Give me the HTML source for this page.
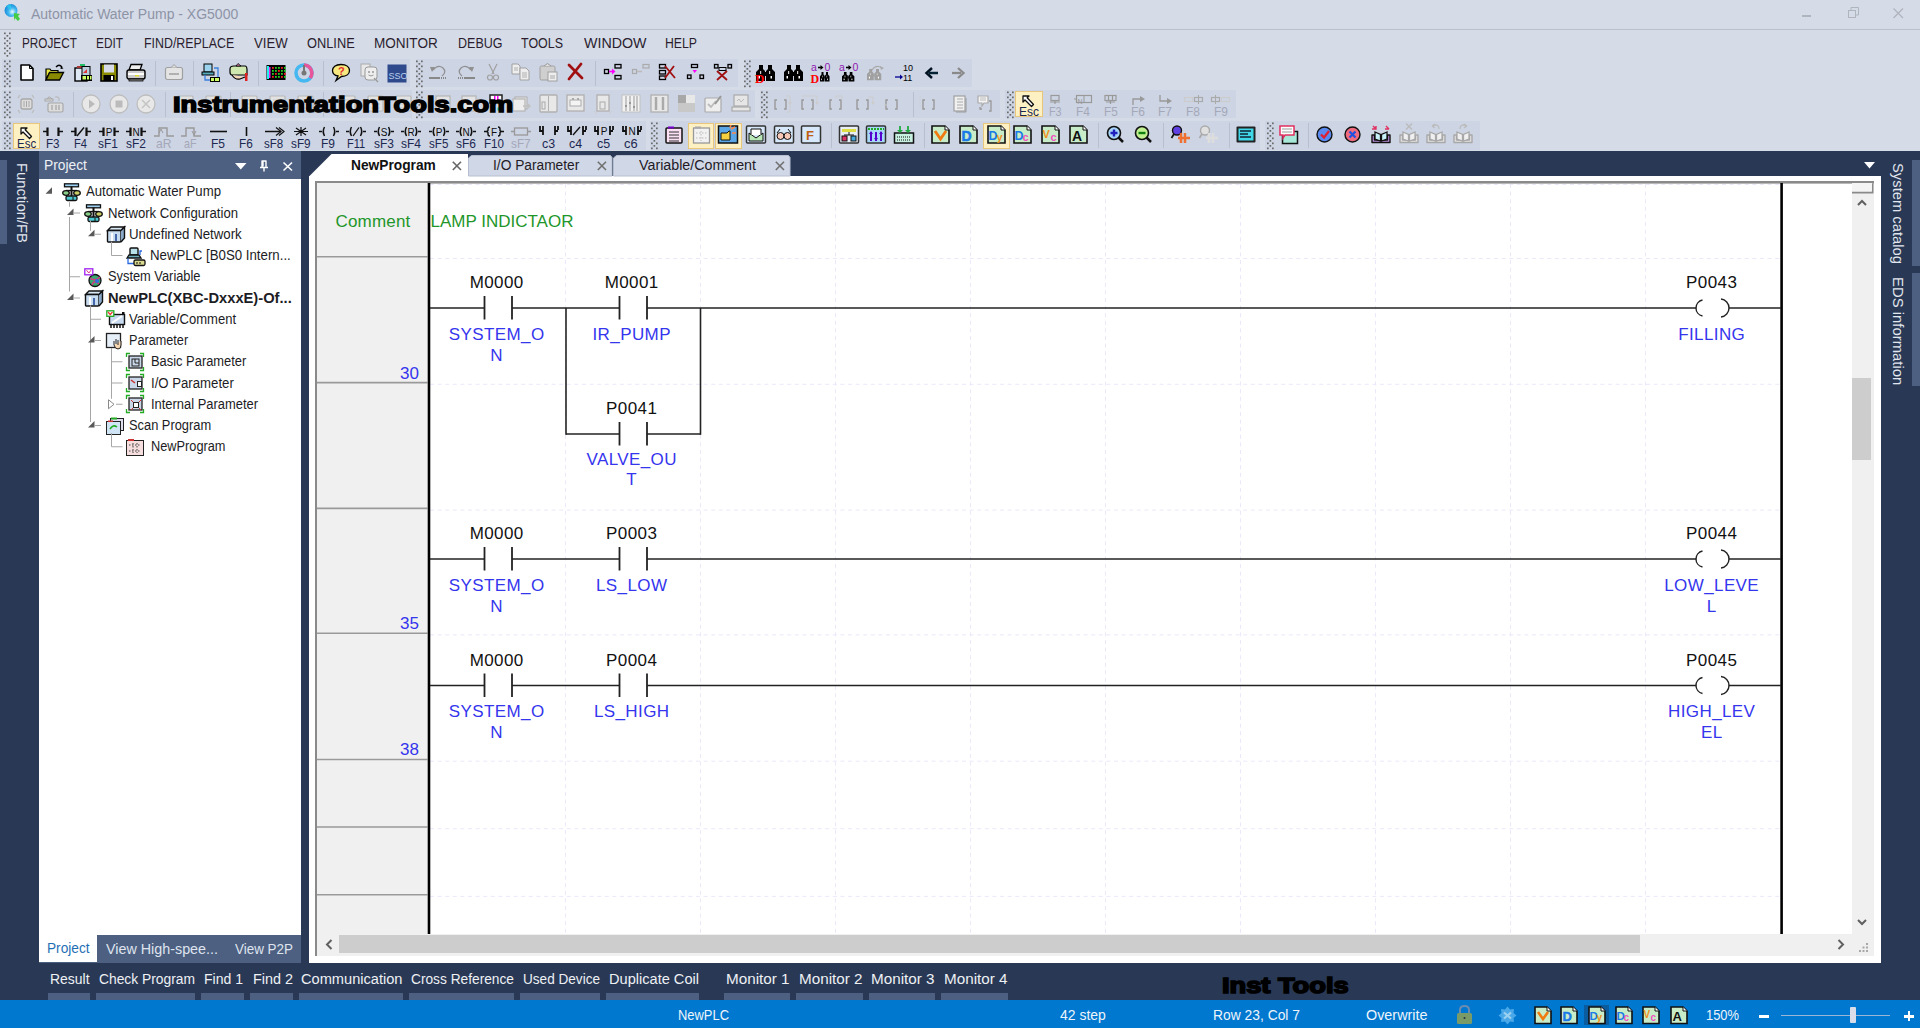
<!DOCTYPE html>
<html><head><meta charset="utf-8"><style>
html,body{margin:0;padding:0;width:1920px;height:1028px;overflow:hidden;background:#d6dbe8;font-family:"Liberation Sans", sans-serif;}
#root{position:relative;width:1920px;height:1028px;overflow:hidden;}
svg{position:absolute;overflow:visible;}
</style></head><body><div id="root">
<div style="position:absolute;left:0px;top:0px;width:1920px;height:29px;background:#d6dbe8;"></div><div style="position:absolute;left:0px;top:29px;width:1920px;height:1px;background:#b9bfcc;"></div><div style="position:absolute;left:31px;top:6.65px;font-size:14px;line-height:14px;color:#8d94a6;white-space:nowrap;">Automatic Water Pump - XG5000</div><div style="position:absolute;left:1802px;top:15px;width:9px;height:1.5px;background:#b0b4bc;"></div><svg style="left:1848px;top:7px" width="12" height="12"><rect x="0.5" y="3.5" width="7" height="7" fill="none" stroke="#b0b4bc"/><path d="M3 3.5V0.5H10.5V8H8" fill="none" stroke="#b0b4bc"/></svg><svg style="left:1893px;top:8px" width="11" height="11"><path d="M0.5 0.5L10 10M10 0.5L0.5 10" stroke="#b0b4bc" stroke-width="1.3"/></svg><div style="position:absolute;left:0px;top:30px;width:1920px;height:28px;background:#d6dbe8;"></div><div style="position:absolute;left:21.5px;top:35.65px;font-size:14px;line-height:14px;color:#2a1e2e;white-space:nowrap;transform:scaleX(0.8387);transform-origin:0 0;">PROJECT</div><div style="position:absolute;left:96.3px;top:35.65px;font-size:14px;line-height:14px;color:#2a1e2e;white-space:nowrap;transform:scaleX(0.8466);transform-origin:0 0;">EDIT</div><div style="position:absolute;left:144.3px;top:35.65px;font-size:14px;line-height:14px;color:#2a1e2e;white-space:nowrap;transform:scaleX(0.8851);transform-origin:0 0;">FIND/REPLACE</div><div style="position:absolute;left:253.8px;top:35.65px;font-size:14px;line-height:14px;color:#2a1e2e;white-space:nowrap;transform:scaleX(0.9419);transform-origin:0 0;">VIEW</div><div style="position:absolute;left:306.8px;top:35.65px;font-size:14px;line-height:14px;color:#2a1e2e;white-space:nowrap;transform:scaleX(0.9151);transform-origin:0 0;">ONLINE</div><div style="position:absolute;left:373.8px;top:35.65px;font-size:14px;line-height:14px;color:#2a1e2e;white-space:nowrap;transform:scaleX(0.9673);transform-origin:0 0;">MONITOR</div><div style="position:absolute;left:457.5px;top:35.65px;font-size:14px;line-height:14px;color:#2a1e2e;white-space:nowrap;transform:scaleX(0.8938);transform-origin:0 0;">DEBUG</div><div style="position:absolute;left:521.3px;top:35.65px;font-size:14px;line-height:14px;color:#2a1e2e;white-space:nowrap;transform:scaleX(0.8898);transform-origin:0 0;">TOOLS</div><div style="position:absolute;left:583.8px;top:35.65px;font-size:14px;line-height:14px;color:#2a1e2e;white-space:nowrap;transform:scaleX(1.0175);transform-origin:0 0;">WINDOW</div><div style="position:absolute;left:665px;top:35.65px;font-size:14px;line-height:14px;color:#2a1e2e;white-space:nowrap;transform:scaleX(0.8749);transform-origin:0 0;">HELP</div><div style="position:absolute;left:2px;top:59px;width:408px;height:28px;background:#cdd4e4;"></div><div style="position:absolute;left:416px;top:59px;width:322px;height:28px;background:#cdd4e4;"></div><div style="position:absolute;left:745px;top:59px;width:227px;height:28px;background:#cdd4e4;"></div><div style="position:absolute;left:2px;top:90px;width:410px;height:28px;background:#cdd4e4;"></div><div style="position:absolute;left:416px;top:90px;width:339px;height:28px;background:#cdd4e4;"></div><div style="position:absolute;left:760px;top:90px;width:240px;height:28px;background:#cdd4e4;"></div><div style="position:absolute;left:1005px;top:90px;width:231px;height:28px;background:#cdd4e4;"></div><div style="position:absolute;left:2px;top:121px;width:644px;height:29px;background:#cdd4e4;"></div><div style="position:absolute;left:650px;top:121px;width:610px;height:29px;background:#cdd4e4;"></div><div style="position:absolute;left:1265px;top:121px;width:215px;height:29px;background:#cdd4e4;"></div><svg style="left:3.7px;top:59px" width="8" height="28"><rect x="0" y="1.5" width="1.7" height="1.7" fill="#6a6a6a"/><rect x="5" y="1.5" width="1.7" height="1.7" fill="#6a6a6a"/><rect x="2.5" y="4.0" width="1.7" height="1.7" fill="#6a6a6a"/><rect x="0" y="6.5" width="1.7" height="1.7" fill="#6a6a6a"/><rect x="5" y="6.5" width="1.7" height="1.7" fill="#6a6a6a"/><rect x="2.5" y="9.0" width="1.7" height="1.7" fill="#6a6a6a"/><rect x="0" y="11.5" width="1.7" height="1.7" fill="#6a6a6a"/><rect x="5" y="11.5" width="1.7" height="1.7" fill="#6a6a6a"/><rect x="2.5" y="14.0" width="1.7" height="1.7" fill="#6a6a6a"/><rect x="0" y="16.5" width="1.7" height="1.7" fill="#6a6a6a"/><rect x="5" y="16.5" width="1.7" height="1.7" fill="#6a6a6a"/><rect x="2.5" y="19.0" width="1.7" height="1.7" fill="#6a6a6a"/><rect x="0" y="21.5" width="1.7" height="1.7" fill="#6a6a6a"/><rect x="5" y="21.5" width="1.7" height="1.7" fill="#6a6a6a"/><rect x="2.5" y="24.0" width="1.7" height="1.7" fill="#6a6a6a"/><rect x="0" y="26.5" width="1.7" height="1.7" fill="#6a6a6a"/><rect x="5" y="26.5" width="1.7" height="1.7" fill="#6a6a6a"/></svg><svg style="left:416px;top:59px" width="8" height="28"><rect x="0" y="1.5" width="1.7" height="1.7" fill="#6a6a6a"/><rect x="5" y="1.5" width="1.7" height="1.7" fill="#6a6a6a"/><rect x="2.5" y="4.0" width="1.7" height="1.7" fill="#6a6a6a"/><rect x="0" y="6.5" width="1.7" height="1.7" fill="#6a6a6a"/><rect x="5" y="6.5" width="1.7" height="1.7" fill="#6a6a6a"/><rect x="2.5" y="9.0" width="1.7" height="1.7" fill="#6a6a6a"/><rect x="0" y="11.5" width="1.7" height="1.7" fill="#6a6a6a"/><rect x="5" y="11.5" width="1.7" height="1.7" fill="#6a6a6a"/><rect x="2.5" y="14.0" width="1.7" height="1.7" fill="#6a6a6a"/><rect x="0" y="16.5" width="1.7" height="1.7" fill="#6a6a6a"/><rect x="5" y="16.5" width="1.7" height="1.7" fill="#6a6a6a"/><rect x="2.5" y="19.0" width="1.7" height="1.7" fill="#6a6a6a"/><rect x="0" y="21.5" width="1.7" height="1.7" fill="#6a6a6a"/><rect x="5" y="21.5" width="1.7" height="1.7" fill="#6a6a6a"/><rect x="2.5" y="24.0" width="1.7" height="1.7" fill="#6a6a6a"/><rect x="0" y="26.5" width="1.7" height="1.7" fill="#6a6a6a"/><rect x="5" y="26.5" width="1.7" height="1.7" fill="#6a6a6a"/></svg><svg style="left:744px;top:59px" width="8" height="28"><rect x="0" y="1.5" width="1.7" height="1.7" fill="#6a6a6a"/><rect x="5" y="1.5" width="1.7" height="1.7" fill="#6a6a6a"/><rect x="2.5" y="4.0" width="1.7" height="1.7" fill="#6a6a6a"/><rect x="0" y="6.5" width="1.7" height="1.7" fill="#6a6a6a"/><rect x="5" y="6.5" width="1.7" height="1.7" fill="#6a6a6a"/><rect x="2.5" y="9.0" width="1.7" height="1.7" fill="#6a6a6a"/><rect x="0" y="11.5" width="1.7" height="1.7" fill="#6a6a6a"/><rect x="5" y="11.5" width="1.7" height="1.7" fill="#6a6a6a"/><rect x="2.5" y="14.0" width="1.7" height="1.7" fill="#6a6a6a"/><rect x="0" y="16.5" width="1.7" height="1.7" fill="#6a6a6a"/><rect x="5" y="16.5" width="1.7" height="1.7" fill="#6a6a6a"/><rect x="2.5" y="19.0" width="1.7" height="1.7" fill="#6a6a6a"/><rect x="0" y="21.5" width="1.7" height="1.7" fill="#6a6a6a"/><rect x="5" y="21.5" width="1.7" height="1.7" fill="#6a6a6a"/><rect x="2.5" y="24.0" width="1.7" height="1.7" fill="#6a6a6a"/><rect x="0" y="26.5" width="1.7" height="1.7" fill="#6a6a6a"/><rect x="5" y="26.5" width="1.7" height="1.7" fill="#6a6a6a"/></svg><svg style="left:3.7px;top:90px" width="8" height="28"><rect x="0" y="1.5" width="1.7" height="1.7" fill="#6a6a6a"/><rect x="5" y="1.5" width="1.7" height="1.7" fill="#6a6a6a"/><rect x="2.5" y="4.0" width="1.7" height="1.7" fill="#6a6a6a"/><rect x="0" y="6.5" width="1.7" height="1.7" fill="#6a6a6a"/><rect x="5" y="6.5" width="1.7" height="1.7" fill="#6a6a6a"/><rect x="2.5" y="9.0" width="1.7" height="1.7" fill="#6a6a6a"/><rect x="0" y="11.5" width="1.7" height="1.7" fill="#6a6a6a"/><rect x="5" y="11.5" width="1.7" height="1.7" fill="#6a6a6a"/><rect x="2.5" y="14.0" width="1.7" height="1.7" fill="#6a6a6a"/><rect x="0" y="16.5" width="1.7" height="1.7" fill="#6a6a6a"/><rect x="5" y="16.5" width="1.7" height="1.7" fill="#6a6a6a"/><rect x="2.5" y="19.0" width="1.7" height="1.7" fill="#6a6a6a"/><rect x="0" y="21.5" width="1.7" height="1.7" fill="#6a6a6a"/><rect x="5" y="21.5" width="1.7" height="1.7" fill="#6a6a6a"/><rect x="2.5" y="24.0" width="1.7" height="1.7" fill="#6a6a6a"/><rect x="0" y="26.5" width="1.7" height="1.7" fill="#6a6a6a"/><rect x="5" y="26.5" width="1.7" height="1.7" fill="#6a6a6a"/></svg><svg style="left:416px;top:90px" width="8" height="28"><rect x="0" y="1.5" width="1.7" height="1.7" fill="#6a6a6a"/><rect x="5" y="1.5" width="1.7" height="1.7" fill="#6a6a6a"/><rect x="2.5" y="4.0" width="1.7" height="1.7" fill="#6a6a6a"/><rect x="0" y="6.5" width="1.7" height="1.7" fill="#6a6a6a"/><rect x="5" y="6.5" width="1.7" height="1.7" fill="#6a6a6a"/><rect x="2.5" y="9.0" width="1.7" height="1.7" fill="#6a6a6a"/><rect x="0" y="11.5" width="1.7" height="1.7" fill="#6a6a6a"/><rect x="5" y="11.5" width="1.7" height="1.7" fill="#6a6a6a"/><rect x="2.5" y="14.0" width="1.7" height="1.7" fill="#6a6a6a"/><rect x="0" y="16.5" width="1.7" height="1.7" fill="#6a6a6a"/><rect x="5" y="16.5" width="1.7" height="1.7" fill="#6a6a6a"/><rect x="2.5" y="19.0" width="1.7" height="1.7" fill="#6a6a6a"/><rect x="0" y="21.5" width="1.7" height="1.7" fill="#6a6a6a"/><rect x="5" y="21.5" width="1.7" height="1.7" fill="#6a6a6a"/><rect x="2.5" y="24.0" width="1.7" height="1.7" fill="#6a6a6a"/><rect x="0" y="26.5" width="1.7" height="1.7" fill="#6a6a6a"/><rect x="5" y="26.5" width="1.7" height="1.7" fill="#6a6a6a"/></svg><svg style="left:761px;top:90px" width="8" height="28"><rect x="0" y="1.5" width="1.7" height="1.7" fill="#6a6a6a"/><rect x="5" y="1.5" width="1.7" height="1.7" fill="#6a6a6a"/><rect x="2.5" y="4.0" width="1.7" height="1.7" fill="#6a6a6a"/><rect x="0" y="6.5" width="1.7" height="1.7" fill="#6a6a6a"/><rect x="5" y="6.5" width="1.7" height="1.7" fill="#6a6a6a"/><rect x="2.5" y="9.0" width="1.7" height="1.7" fill="#6a6a6a"/><rect x="0" y="11.5" width="1.7" height="1.7" fill="#6a6a6a"/><rect x="5" y="11.5" width="1.7" height="1.7" fill="#6a6a6a"/><rect x="2.5" y="14.0" width="1.7" height="1.7" fill="#6a6a6a"/><rect x="0" y="16.5" width="1.7" height="1.7" fill="#6a6a6a"/><rect x="5" y="16.5" width="1.7" height="1.7" fill="#6a6a6a"/><rect x="2.5" y="19.0" width="1.7" height="1.7" fill="#6a6a6a"/><rect x="0" y="21.5" width="1.7" height="1.7" fill="#6a6a6a"/><rect x="5" y="21.5" width="1.7" height="1.7" fill="#6a6a6a"/><rect x="2.5" y="24.0" width="1.7" height="1.7" fill="#6a6a6a"/><rect x="0" y="26.5" width="1.7" height="1.7" fill="#6a6a6a"/><rect x="5" y="26.5" width="1.7" height="1.7" fill="#6a6a6a"/></svg><svg style="left:1006.5px;top:90px" width="8" height="28"><rect x="0" y="1.5" width="1.7" height="1.7" fill="#6a6a6a"/><rect x="5" y="1.5" width="1.7" height="1.7" fill="#6a6a6a"/><rect x="2.5" y="4.0" width="1.7" height="1.7" fill="#6a6a6a"/><rect x="0" y="6.5" width="1.7" height="1.7" fill="#6a6a6a"/><rect x="5" y="6.5" width="1.7" height="1.7" fill="#6a6a6a"/><rect x="2.5" y="9.0" width="1.7" height="1.7" fill="#6a6a6a"/><rect x="0" y="11.5" width="1.7" height="1.7" fill="#6a6a6a"/><rect x="5" y="11.5" width="1.7" height="1.7" fill="#6a6a6a"/><rect x="2.5" y="14.0" width="1.7" height="1.7" fill="#6a6a6a"/><rect x="0" y="16.5" width="1.7" height="1.7" fill="#6a6a6a"/><rect x="5" y="16.5" width="1.7" height="1.7" fill="#6a6a6a"/><rect x="2.5" y="19.0" width="1.7" height="1.7" fill="#6a6a6a"/><rect x="0" y="21.5" width="1.7" height="1.7" fill="#6a6a6a"/><rect x="5" y="21.5" width="1.7" height="1.7" fill="#6a6a6a"/><rect x="2.5" y="24.0" width="1.7" height="1.7" fill="#6a6a6a"/><rect x="0" y="26.5" width="1.7" height="1.7" fill="#6a6a6a"/><rect x="5" y="26.5" width="1.7" height="1.7" fill="#6a6a6a"/></svg><svg style="left:3.7px;top:121px" width="8" height="29"><rect x="0" y="1.5" width="1.7" height="1.7" fill="#6a6a6a"/><rect x="5" y="1.5" width="1.7" height="1.7" fill="#6a6a6a"/><rect x="2.5" y="4.0" width="1.7" height="1.7" fill="#6a6a6a"/><rect x="0" y="6.5" width="1.7" height="1.7" fill="#6a6a6a"/><rect x="5" y="6.5" width="1.7" height="1.7" fill="#6a6a6a"/><rect x="2.5" y="9.0" width="1.7" height="1.7" fill="#6a6a6a"/><rect x="0" y="11.5" width="1.7" height="1.7" fill="#6a6a6a"/><rect x="5" y="11.5" width="1.7" height="1.7" fill="#6a6a6a"/><rect x="2.5" y="14.0" width="1.7" height="1.7" fill="#6a6a6a"/><rect x="0" y="16.5" width="1.7" height="1.7" fill="#6a6a6a"/><rect x="5" y="16.5" width="1.7" height="1.7" fill="#6a6a6a"/><rect x="2.5" y="19.0" width="1.7" height="1.7" fill="#6a6a6a"/><rect x="0" y="21.5" width="1.7" height="1.7" fill="#6a6a6a"/><rect x="5" y="21.5" width="1.7" height="1.7" fill="#6a6a6a"/><rect x="2.5" y="24.0" width="1.7" height="1.7" fill="#6a6a6a"/><rect x="0" y="26.5" width="1.7" height="1.7" fill="#6a6a6a"/><rect x="5" y="26.5" width="1.7" height="1.7" fill="#6a6a6a"/></svg><svg style="left:651px;top:121px" width="8" height="29"><rect x="0" y="1.5" width="1.7" height="1.7" fill="#6a6a6a"/><rect x="5" y="1.5" width="1.7" height="1.7" fill="#6a6a6a"/><rect x="2.5" y="4.0" width="1.7" height="1.7" fill="#6a6a6a"/><rect x="0" y="6.5" width="1.7" height="1.7" fill="#6a6a6a"/><rect x="5" y="6.5" width="1.7" height="1.7" fill="#6a6a6a"/><rect x="2.5" y="9.0" width="1.7" height="1.7" fill="#6a6a6a"/><rect x="0" y="11.5" width="1.7" height="1.7" fill="#6a6a6a"/><rect x="5" y="11.5" width="1.7" height="1.7" fill="#6a6a6a"/><rect x="2.5" y="14.0" width="1.7" height="1.7" fill="#6a6a6a"/><rect x="0" y="16.5" width="1.7" height="1.7" fill="#6a6a6a"/><rect x="5" y="16.5" width="1.7" height="1.7" fill="#6a6a6a"/><rect x="2.5" y="19.0" width="1.7" height="1.7" fill="#6a6a6a"/><rect x="0" y="21.5" width="1.7" height="1.7" fill="#6a6a6a"/><rect x="5" y="21.5" width="1.7" height="1.7" fill="#6a6a6a"/><rect x="2.5" y="24.0" width="1.7" height="1.7" fill="#6a6a6a"/><rect x="0" y="26.5" width="1.7" height="1.7" fill="#6a6a6a"/><rect x="5" y="26.5" width="1.7" height="1.7" fill="#6a6a6a"/></svg><svg style="left:1266.5px;top:121px" width="8" height="29"><rect x="0" y="1.5" width="1.7" height="1.7" fill="#6a6a6a"/><rect x="5" y="1.5" width="1.7" height="1.7" fill="#6a6a6a"/><rect x="2.5" y="4.0" width="1.7" height="1.7" fill="#6a6a6a"/><rect x="0" y="6.5" width="1.7" height="1.7" fill="#6a6a6a"/><rect x="5" y="6.5" width="1.7" height="1.7" fill="#6a6a6a"/><rect x="2.5" y="9.0" width="1.7" height="1.7" fill="#6a6a6a"/><rect x="0" y="11.5" width="1.7" height="1.7" fill="#6a6a6a"/><rect x="5" y="11.5" width="1.7" height="1.7" fill="#6a6a6a"/><rect x="2.5" y="14.0" width="1.7" height="1.7" fill="#6a6a6a"/><rect x="0" y="16.5" width="1.7" height="1.7" fill="#6a6a6a"/><rect x="5" y="16.5" width="1.7" height="1.7" fill="#6a6a6a"/><rect x="2.5" y="19.0" width="1.7" height="1.7" fill="#6a6a6a"/><rect x="0" y="21.5" width="1.7" height="1.7" fill="#6a6a6a"/><rect x="5" y="21.5" width="1.7" height="1.7" fill="#6a6a6a"/><rect x="2.5" y="24.0" width="1.7" height="1.7" fill="#6a6a6a"/><rect x="0" y="26.5" width="1.7" height="1.7" fill="#6a6a6a"/><rect x="5" y="26.5" width="1.7" height="1.7" fill="#6a6a6a"/></svg><div style="position:absolute;left:0px;top:151px;width:1920px;height:849px;background:#293955;"></div><div style="position:absolute;left:0px;top:160px;width:7px;height:84px;background:#4d6082;"></div><div style="position:absolute;left:29px;top:163px;font-size:14px;line-height:14px;color:#e2e6ee;white-space:nowrap;transform:rotate(90deg) scaleX(1.0599);transform-origin:0 0;">Function/FB</div><div style="position:absolute;left:39px;top:151px;width:262px;height:28px;background:#4d6082;"></div><div style="position:absolute;left:44.4px;top:157.85px;font-size:14px;line-height:14px;color:#eef1f6;white-space:nowrap;transform:scaleX(0.9845);transform-origin:0 0;">Project</div><svg style="left:235px;top:163px" width="12" height="7"><path d="M0 0H11.5L5.75 6.5Z" fill="#fff"/></svg><svg style="left:259px;top:160px" width="10" height="12"><path d="M2.5 1H7.5M3 1V7M7 1V7M1 7.5H9M5 7.5V11.5M4 1.5V6.5" stroke="#fff" stroke-width="1.4" fill="none"/></svg><svg style="left:283px;top:162px" width="10" height="9"><path d="M0.5 0.5L9 8.5M9 0.5L0.5 8.5" stroke="#fff" stroke-width="1.6"/></svg><div style="position:absolute;left:39px;top:179px;width:262px;height:756px;background:#fff;"></div><div style="position:absolute;left:39px;top:935px;width:262px;height:28px;background:#4d6082;"></div><div style="position:absolute;left:39px;top:935px;width:58px;height:27px;background:#fff;"></div><div style="position:absolute;left:47px;top:940.65px;font-size:14px;line-height:14px;color:#1f6fb5;white-space:nowrap;transform:scaleX(0.9754);transform-origin:0 0;">Project</div><div style="position:absolute;left:106px;top:941.65px;font-size:14px;line-height:14px;color:#dfe4ee;white-space:nowrap;transform:scaleX(1.0231);transform-origin:0 0;">View High-spee...</div><div style="position:absolute;left:235px;top:941.65px;font-size:14px;line-height:14px;color:#dfe4ee;white-space:nowrap;transform:scaleX(0.9595);transform-origin:0 0;">View P2P</div><div style="position:absolute;left:309px;top:176px;width:1572px;height:787px;background:#fff;"></div><div style="position:absolute;left:1912px;top:160px;width:8px;height:106px;background:#4d6082;"></div><div style="position:absolute;left:1912px;top:273px;width:8px;height:113px;background:#4d6082;"></div><div style="position:absolute;left:1904.5px;top:163.4px;font-size:14px;line-height:14px;color:#e2e6ee;white-space:nowrap;transform:rotate(90deg) scaleX(1.0553);transform-origin:0 0;">System catalog</div><div style="position:absolute;left:1904.5px;top:276.5px;font-size:14px;line-height:14px;color:#e2e6ee;white-space:nowrap;transform:rotate(90deg) scaleX(1.0624);transform-origin:0 0;">EDS information</div><div style="position:absolute;left:50px;top:971.95px;font-size:14px;line-height:14px;color:#eef0f4;white-space:nowrap;transform:scaleX(0.9954);transform-origin:0 0;">Result</div><div style="position:absolute;left:47.5px;top:993px;width:42.5px;height:7px;background:#4d6082;"></div><div style="position:absolute;left:99px;top:971.95px;font-size:14px;line-height:14px;color:#eef0f4;white-space:nowrap;transform:scaleX(0.9871);transform-origin:0 0;">Check Program</div><div style="position:absolute;left:96px;top:993px;width:99px;height:7px;background:#4d6082;"></div><div style="position:absolute;left:204px;top:971.95px;font-size:14px;line-height:14px;color:#eef0f4;white-space:nowrap;transform:scaleX(1.0023);transform-origin:0 0;">Find 1</div><div style="position:absolute;left:201px;top:993px;width:43px;height:7px;background:#4d6082;"></div><div style="position:absolute;left:252.5px;top:971.95px;font-size:14px;line-height:14px;color:#eef0f4;white-space:nowrap;transform:scaleX(1.0280);transform-origin:0 0;">Find 2</div><div style="position:absolute;left:250px;top:993px;width:42.5px;height:7px;background:#4d6082;"></div><div style="position:absolute;left:301px;top:971.95px;font-size:14px;line-height:14px;color:#eef0f4;white-space:nowrap;transform:scaleX(1.0435);transform-origin:0 0;">Communication</div><div style="position:absolute;left:299px;top:993px;width:103.5px;height:7px;background:#4d6082;"></div><div style="position:absolute;left:411px;top:971.95px;font-size:14px;line-height:14px;color:#eef0f4;white-space:nowrap;transform:scaleX(0.9805);transform-origin:0 0;">Cross Reference</div><div style="position:absolute;left:409px;top:993px;width:105px;height:7px;background:#4d6082;"></div><div style="position:absolute;left:522.5px;top:971.95px;font-size:14px;line-height:14px;color:#eef0f4;white-space:nowrap;transform:scaleX(0.9702);transform-origin:0 0;">Used Device</div><div style="position:absolute;left:520px;top:993px;width:80px;height:7px;background:#4d6082;"></div><div style="position:absolute;left:609px;top:971.95px;font-size:14px;line-height:14px;color:#eef0f4;white-space:nowrap;transform:scaleX(1.0420);transform-origin:0 0;">Duplicate Coil</div><div style="position:absolute;left:606px;top:993px;width:93px;height:7px;background:#4d6082;"></div><div style="position:absolute;left:726px;top:971.95px;font-size:14px;line-height:14px;color:#eef0f4;white-space:nowrap;transform:scaleX(1.0881);transform-origin:0 0;">Monitor 1</div><div style="position:absolute;left:724px;top:993px;width:66px;height:7px;background:#4d6082;"></div><div style="position:absolute;left:799px;top:971.95px;font-size:14px;line-height:14px;color:#eef0f4;white-space:nowrap;transform:scaleX(1.0881);transform-origin:0 0;">Monitor 2</div><div style="position:absolute;left:796px;top:993px;width:66.5px;height:7px;background:#4d6082;"></div><div style="position:absolute;left:871px;top:971.95px;font-size:14px;line-height:14px;color:#eef0f4;white-space:nowrap;transform:scaleX(1.0881);transform-origin:0 0;">Monitor 3</div><div style="position:absolute;left:869px;top:993px;width:66px;height:7px;background:#4d6082;"></div><div style="position:absolute;left:944px;top:971.95px;font-size:14px;line-height:14px;color:#eef0f4;white-space:nowrap;transform:scaleX(1.0881);transform-origin:0 0;">Monitor 4</div><div style="position:absolute;left:941px;top:993px;width:66.5px;height:7px;background:#4d6082;"></div><div style="position:absolute;left:1221.7px;top:974.68px;font-size:22px;line-height:22px;color:#000;white-space:nowrap;transform:scaleX(1.2381);transform-origin:0 0;font-weight:bold;-webkit-text-stroke:1.6px #000;">Inst Tools</div><div style="position:absolute;left:0px;top:1000px;width:1920px;height:28px;background:#0078cf;"></div><div style="position:absolute;left:678px;top:1008.15px;font-size:14px;line-height:14px;color:#eef4fb;white-space:nowrap;transform:scaleX(0.9232);transform-origin:0 0;">NewPLC</div><div style="position:absolute;left:1060px;top:1008.15px;font-size:14px;line-height:14px;color:#eef4fb;white-space:nowrap;transform:scaleX(0.9973);transform-origin:0 0;">42 step</div><div style="position:absolute;left:1213px;top:1008.15px;font-size:14px;line-height:14px;color:#eef4fb;white-space:nowrap;transform:scaleX(0.9894);transform-origin:0 0;">Row 23, Col 7</div><div style="position:absolute;left:1365.5px;top:1008.15px;font-size:14px;line-height:14px;color:#eef4fb;white-space:nowrap;transform:scaleX(1.0267);transform-origin:0 0;">Overwrite</div><div style="position:absolute;left:1706px;top:1008.15px;font-size:14px;line-height:14px;color:#eef4fb;white-space:nowrap;transform:scaleX(0.9216);transform-origin:0 0;">150%</div><div style="position:absolute;left:1759px;top:1015px;width:10px;height:2.5px;background:#fff;"></div><div style="position:absolute;left:1781px;top:1015px;width:109px;height:1px;background:#9ab6d6;"></div><div style="position:absolute;left:1850px;top:1006.5px;width:6px;height:16.5px;background:#d8dde9;border-radius:1px;"></div><div style="position:absolute;left:1904px;top:1015px;width:10px;height:2.5px;background:#fff;"></div><div style="position:absolute;left:1907.8px;top:1011px;width:2.5px;height:10px;background:#fff;"></div><svg style="left:309px;top:154px" width="160" height="23"><path d="M0 23V22.5L22.5 0H159V23Z" fill="#fff"/></svg><div style="position:absolute;left:350.6px;top:158.15px;font-size:14px;line-height:14px;color:#111;white-space:nowrap;transform:scaleX(0.9819);transform-origin:0 0;font-weight:bold;">NewProgram</div><svg style="left:452px;top:161px" width="10" height="10"><path d="M0.8 0.8L9 9M9 0.8L0.8 9" stroke="#666" stroke-width="1.6"/></svg><svg style="left:468px;top:155px" width="144.5" height="21"><path d="M0.5 21V3L3.5 0.5H142.5L144.0 2.5V21Z" fill="#d0d8e7" stroke="#b6bfd0" stroke-width="1"/></svg><div style="position:absolute;left:493.4px;top:158.15px;font-size:14px;line-height:14px;color:#231a26;white-space:nowrap;transform:scaleX(0.9816);transform-origin:0 0;">I/O Parameter</div><svg style="left:597px;top:161px" width="10" height="10"><path d="M0.8 0.8L9 9M9 0.8L0.8 9" stroke="#707070" stroke-width="1.6"/></svg><svg style="left:613px;top:155px" width="177.5" height="21"><path d="M0.5 21V3L3.5 0.5H175.5L177.0 2.5V21Z" fill="#d0d8e7" stroke="#b6bfd0" stroke-width="1"/></svg><div style="position:absolute;left:639px;top:158.15px;font-size:14px;line-height:14px;color:#231a26;white-space:nowrap;transform:scaleX(1.0183);transform-origin:0 0;">Variable/Comment</div><svg style="left:775px;top:161px" width="10" height="10"><path d="M0.8 0.8L9 9M9 0.8L0.8 9" stroke="#707070" stroke-width="1.6"/></svg><svg style="left:1864px;top:162px" width="12" height="7"><path d="M0 0H11L5.5 6.5Z" fill="#fff"/></svg><div style="position:absolute;left:315px;top:181px;width:1559px;height:2px;background:#8a8a8a;"></div><div style="position:absolute;left:317px;top:183px;width:1557px;height:1px;background:#b8b8b8;"></div><div style="position:absolute;left:315px;top:181px;width:2px;height:775px;background:#8a8a8a;"></div><div style="position:absolute;left:317px;top:183px;width:111px;height:751px;background:#f0f0f0;"></div><svg style="left:0;top:0" width="1920" height="1028"><line x1="317" y1="256.8" x2="427.5" y2="256.8" stroke="#9a9a9a" stroke-width="1.6" /><line x1="317" y1="382.6" x2="427.5" y2="382.6" stroke="#9a9a9a" stroke-width="1.6" /><line x1="317" y1="508.4" x2="427.5" y2="508.4" stroke="#9a9a9a" stroke-width="1.6" /><line x1="317" y1="633.2" x2="427.5" y2="633.2" stroke="#9a9a9a" stroke-width="1.6" /><line x1="317" y1="759.5" x2="427.5" y2="759.5" stroke="#9a9a9a" stroke-width="1.6" /><line x1="317" y1="827" x2="427.5" y2="827" stroke="#9a9a9a" stroke-width="1.6" /><line x1="317" y1="894.7" x2="427.5" y2="894.7" stroke="#9a9a9a" stroke-width="1.6" /><line x1="430" y1="184.5" x2="1780" y2="184.5" stroke="#e9e9fb" stroke-width="1" stroke-dasharray="4 3.6"/><line x1="430" y1="258.5" x2="1780" y2="258.5" stroke="#e9e9fb" stroke-width="1" stroke-dasharray="4 3.6"/><line x1="430" y1="384.3" x2="1780" y2="384.3" stroke="#e9e9fb" stroke-width="1" stroke-dasharray="4 3.6"/><line x1="430" y1="510.09999999999997" x2="1780" y2="510.09999999999997" stroke="#e9e9fb" stroke-width="1" stroke-dasharray="4 3.6"/><line x1="430" y1="634.9000000000001" x2="1780" y2="634.9000000000001" stroke="#e9e9fb" stroke-width="1" stroke-dasharray="4 3.6"/><line x1="430" y1="761.2" x2="1780" y2="761.2" stroke="#e9e9fb" stroke-width="1" stroke-dasharray="4 3.6"/><line x1="430" y1="828.7" x2="1780" y2="828.7" stroke="#e9e9fb" stroke-width="1" stroke-dasharray="4 3.6"/><line x1="430" y1="896.4000000000001" x2="1780" y2="896.4000000000001" stroke="#e9e9fb" stroke-width="1" stroke-dasharray="4 3.6"/><line x1="565.5" y1="184" x2="565.5" y2="934" stroke="#e9e9fb" stroke-width="1" stroke-dasharray="4 3.6"/><line x1="700.5" y1="184" x2="700.5" y2="934" stroke="#e9e9fb" stroke-width="1" stroke-dasharray="4 3.6"/><line x1="835.5" y1="184" x2="835.5" y2="934" stroke="#e9e9fb" stroke-width="1" stroke-dasharray="4 3.6"/><line x1="970.5" y1="184" x2="970.5" y2="934" stroke="#e9e9fb" stroke-width="1" stroke-dasharray="4 3.6"/><line x1="1105.5" y1="184" x2="1105.5" y2="934" stroke="#e9e9fb" stroke-width="1" stroke-dasharray="4 3.6"/><line x1="1240.5" y1="184" x2="1240.5" y2="934" stroke="#e9e9fb" stroke-width="1" stroke-dasharray="4 3.6"/><line x1="1375.5" y1="184" x2="1375.5" y2="934" stroke="#e9e9fb" stroke-width="1" stroke-dasharray="4 3.6"/><line x1="1510.5" y1="184" x2="1510.5" y2="934" stroke="#e9e9fb" stroke-width="1" stroke-dasharray="4 3.6"/><line x1="1645.5" y1="184" x2="1645.5" y2="934" stroke="#e9e9fb" stroke-width="1" stroke-dasharray="4 3.6"/><line x1="429" y1="183" x2="429" y2="934" stroke="#000" stroke-width="2.6" /><line x1="1781.6" y1="183" x2="1781.6" y2="934" stroke="#000" stroke-width="2.6" /><line x1="430" y1="308" x2="484.5" y2="308" stroke="#222" stroke-width="1.6" /><line x1="512.0" y1="308" x2="619.5" y2="308" stroke="#222" stroke-width="1.6" /><line x1="647.0" y1="308" x2="1696.3" y2="308" stroke="#222" stroke-width="1.6" /><line x1="1728.7" y1="308" x2="1781" y2="308" stroke="#222" stroke-width="1.6" /><line x1="484.5" y1="296" x2="484.5" y2="319.5" stroke="#222" stroke-width="1.8" /><line x1="512.0" y1="296" x2="512.0" y2="319.5" stroke="#222" stroke-width="1.8" /><line x1="619.5" y1="296" x2="619.5" y2="319.5" stroke="#222" stroke-width="1.8" /><line x1="647.0" y1="296" x2="647.0" y2="319.5" stroke="#222" stroke-width="1.8" /><path d="M1702.5 300 A8.17 8.17 0 0 0 1702.5 316 M1721.0 299 A9.06 9.06 0 0 1 1721.0 317" fill="none" stroke="#222" stroke-width="1.4"/><line x1="430" y1="559" x2="484.5" y2="559" stroke="#222" stroke-width="1.6" /><line x1="512.0" y1="559" x2="619.5" y2="559" stroke="#222" stroke-width="1.6" /><line x1="647.0" y1="559" x2="1696.3" y2="559" stroke="#222" stroke-width="1.6" /><line x1="1728.7" y1="559" x2="1781" y2="559" stroke="#222" stroke-width="1.6" /><line x1="484.5" y1="547" x2="484.5" y2="570.5" stroke="#222" stroke-width="1.8" /><line x1="512.0" y1="547" x2="512.0" y2="570.5" stroke="#222" stroke-width="1.8" /><line x1="619.5" y1="547" x2="619.5" y2="570.5" stroke="#222" stroke-width="1.8" /><line x1="647.0" y1="547" x2="647.0" y2="570.5" stroke="#222" stroke-width="1.8" /><path d="M1702.5 551 A8.17 8.17 0 0 0 1702.5 567 M1721.0 550 A9.06 9.06 0 0 1 1721.0 568" fill="none" stroke="#222" stroke-width="1.4"/><line x1="430" y1="685.5" x2="484.5" y2="685.5" stroke="#222" stroke-width="1.6" /><line x1="512.0" y1="685.5" x2="619.5" y2="685.5" stroke="#222" stroke-width="1.6" /><line x1="647.0" y1="685.5" x2="1696.3" y2="685.5" stroke="#222" stroke-width="1.6" /><line x1="1728.7" y1="685.5" x2="1781" y2="685.5" stroke="#222" stroke-width="1.6" /><line x1="484.5" y1="673.5" x2="484.5" y2="697.0" stroke="#222" stroke-width="1.8" /><line x1="512.0" y1="673.5" x2="512.0" y2="697.0" stroke="#222" stroke-width="1.8" /><line x1="619.5" y1="673.5" x2="619.5" y2="697.0" stroke="#222" stroke-width="1.8" /><line x1="647.0" y1="673.5" x2="647.0" y2="697.0" stroke="#222" stroke-width="1.8" /><path d="M1702.5 677.5 A8.17 8.17 0 0 0 1702.5 693.5 M1721.0 676.5 A9.06 9.06 0 0 1 1721.0 694.5" fill="none" stroke="#222" stroke-width="1.4"/><line x1="566" y1="308" x2="566" y2="434.8" stroke="#222" stroke-width="1.6" /><line x1="700.5" y1="308" x2="700.5" y2="434.8" stroke="#222" stroke-width="1.6" /><line x1="566" y1="434" x2="619.5" y2="434" stroke="#222" stroke-width="1.6" /><line x1="647" y1="434" x2="700.5" y2="434" stroke="#222" stroke-width="1.6" /><line x1="619.5" y1="422" x2="619.5" y2="445.5" stroke="#222" stroke-width="1.8" /><line x1="647.0" y1="422" x2="647.0" y2="445.5" stroke="#222" stroke-width="1.8" /></svg><div style="position:absolute;left:73px;width:600px;text-align:center;top:213.31px;font-size:17px;line-height:17px;color:#1e962a;white-space:nowrap;letter-spacing:0.2px;">Comment</div><div style="position:absolute;left:430.5px;top:213.11px;font-size:17px;line-height:17px;color:#1e962a;white-space:nowrap;">LAMP INDICTAOR</div><div style="position:absolute;left:-181px;width:600px;text-align:right;top:364.61px;font-size:17px;line-height:17px;color:#3535ee;white-space:nowrap;">30</div><div style="position:absolute;left:-181px;width:600px;text-align:right;top:614.61px;font-size:17px;line-height:17px;color:#3535ee;white-space:nowrap;">35</div><div style="position:absolute;left:-181px;width:600px;text-align:right;top:740.61px;font-size:17px;line-height:17px;color:#3535ee;white-space:nowrap;">38</div><div style="position:absolute;left:196.7px;width:600px;text-align:center;top:274.11px;font-size:17px;line-height:17px;color:#111;white-space:nowrap;letter-spacing:0.4px;">M0000</div><div style="position:absolute;left:196.7px;width:600px;text-align:center;top:325.61px;font-size:17px;line-height:17px;color:#3535ee;white-space:nowrap;letter-spacing:0.4px;">SYSTEM_O</div><div style="position:absolute;left:196.7px;width:600px;text-align:center;top:346.61px;font-size:17px;line-height:17px;color:#3535ee;white-space:nowrap;letter-spacing:0.4px;">N</div><div style="position:absolute;left:331.70000000000005px;width:600px;text-align:center;top:274.11px;font-size:17px;line-height:17px;color:#111;white-space:nowrap;letter-spacing:0.4px;">M0001</div><div style="position:absolute;left:331.70000000000005px;width:600px;text-align:center;top:325.61px;font-size:17px;line-height:17px;color:#3535ee;white-space:nowrap;letter-spacing:0.4px;">IR_PUMP</div><div style="position:absolute;left:1411.7px;width:600px;text-align:center;top:274.11px;font-size:17px;line-height:17px;color:#111;white-space:nowrap;letter-spacing:0.4px;">P0043</div><div style="position:absolute;left:1411.7px;width:600px;text-align:center;top:325.61px;font-size:17px;line-height:17px;color:#3535ee;white-space:nowrap;letter-spacing:0.4px;">FILLING</div><div style="position:absolute;left:196.7px;width:600px;text-align:center;top:525.11px;font-size:17px;line-height:17px;color:#111;white-space:nowrap;letter-spacing:0.4px;">M0000</div><div style="position:absolute;left:196.7px;width:600px;text-align:center;top:576.61px;font-size:17px;line-height:17px;color:#3535ee;white-space:nowrap;letter-spacing:0.4px;">SYSTEM_O</div><div style="position:absolute;left:196.7px;width:600px;text-align:center;top:597.61px;font-size:17px;line-height:17px;color:#3535ee;white-space:nowrap;letter-spacing:0.4px;">N</div><div style="position:absolute;left:331.70000000000005px;width:600px;text-align:center;top:525.11px;font-size:17px;line-height:17px;color:#111;white-space:nowrap;letter-spacing:0.4px;">P0003</div><div style="position:absolute;left:331.70000000000005px;width:600px;text-align:center;top:576.61px;font-size:17px;line-height:17px;color:#3535ee;white-space:nowrap;letter-spacing:0.4px;">LS_LOW</div><div style="position:absolute;left:1411.7px;width:600px;text-align:center;top:525.11px;font-size:17px;line-height:17px;color:#111;white-space:nowrap;letter-spacing:0.4px;">P0044</div><div style="position:absolute;left:1411.7px;width:600px;text-align:center;top:576.61px;font-size:17px;line-height:17px;color:#3535ee;white-space:nowrap;letter-spacing:0.4px;">LOW_LEVE</div><div style="position:absolute;left:1411.7px;width:600px;text-align:center;top:597.61px;font-size:17px;line-height:17px;color:#3535ee;white-space:nowrap;letter-spacing:0.4px;">L</div><div style="position:absolute;left:196.7px;width:600px;text-align:center;top:651.61px;font-size:17px;line-height:17px;color:#111;white-space:nowrap;letter-spacing:0.4px;">M0000</div><div style="position:absolute;left:196.7px;width:600px;text-align:center;top:703.11px;font-size:17px;line-height:17px;color:#3535ee;white-space:nowrap;letter-spacing:0.4px;">SYSTEM_O</div><div style="position:absolute;left:196.7px;width:600px;text-align:center;top:724.11px;font-size:17px;line-height:17px;color:#3535ee;white-space:nowrap;letter-spacing:0.4px;">N</div><div style="position:absolute;left:331.70000000000005px;width:600px;text-align:center;top:651.61px;font-size:17px;line-height:17px;color:#111;white-space:nowrap;letter-spacing:0.4px;">P0004</div><div style="position:absolute;left:331.70000000000005px;width:600px;text-align:center;top:703.11px;font-size:17px;line-height:17px;color:#3535ee;white-space:nowrap;letter-spacing:0.4px;">LS_HIGH</div><div style="position:absolute;left:1411.7px;width:600px;text-align:center;top:651.61px;font-size:17px;line-height:17px;color:#111;white-space:nowrap;letter-spacing:0.4px;">P0045</div><div style="position:absolute;left:1411.7px;width:600px;text-align:center;top:703.11px;font-size:17px;line-height:17px;color:#3535ee;white-space:nowrap;letter-spacing:0.4px;">HIGH_LEV</div><div style="position:absolute;left:1411.7px;width:600px;text-align:center;top:724.11px;font-size:17px;line-height:17px;color:#3535ee;white-space:nowrap;letter-spacing:0.4px;">EL</div><div style="position:absolute;left:331.70000000000005px;width:600px;text-align:center;top:400.41px;font-size:17px;line-height:17px;color:#111;white-space:nowrap;letter-spacing:0.4px;">P0041</div><div style="position:absolute;left:331.70000000000005px;width:600px;text-align:center;top:450.61px;font-size:17px;line-height:17px;color:#3535ee;white-space:nowrap;letter-spacing:0.4px;">VALVE_OU</div><div style="position:absolute;left:331.70000000000005px;width:600px;text-align:center;top:471.11px;font-size:17px;line-height:17px;color:#3535ee;white-space:nowrap;letter-spacing:0.4px;">T</div><div style="position:absolute;left:1852px;top:184px;width:22px;height:750px;background:#f0f0f0;"></div><svg style="left:1852px;top:183px" width="22" height="11"><path d="M0 9.5H20.5V0.5" fill="none" stroke="#8a8a8a" stroke-width="2"/><rect x="0" y="0" width="20" height="8.5" fill="#f4f4f4"/></svg><div style="position:absolute;left:1852px;top:377.5px;width:19px;height:82.5px;background:#cdcdcd;"></div><svg style="left:1857px;top:199px" width="10" height="7"><path d="M1 6L5 2L9 6" fill="none" stroke="#606060" stroke-width="2"/></svg><svg style="left:1857px;top:919px" width="10" height="7"><path d="M1 1L5 5L9 1" fill="none" stroke="#606060" stroke-width="2"/></svg><div style="position:absolute;left:317px;top:934px;width:1535px;height:22px;background:#f0f0f0;"></div><div style="position:absolute;left:1852px;top:934px;width:22px;height:22px;background:#f0f0f0;"></div><div style="position:absolute;left:339px;top:935.4px;width:1301px;height:18px;background:#cdcdcd;"></div><svg style="left:325px;top:939px" width="8" height="11"><path d="M6.5 1L2 5.5L6.5 10" fill="none" stroke="#606060" stroke-width="2"/></svg><svg style="left:1837px;top:939px" width="8" height="11"><path d="M1.5 1L6 5.5L1.5 10" fill="none" stroke="#606060" stroke-width="2"/></svg><svg style="left:1858px;top:942px" width="12" height="12" fill="#a8a8a8"><rect x="8" y="1" width="2" height="2"/><rect x="4.5" y="4.5" width="2" height="2"/><rect x="8" y="4.5" width="2" height="2"/><rect x="1" y="8" width="2" height="2"/><rect x="4.5" y="8" width="2" height="2"/><rect x="8" y="8" width="2" height="2"/></svg><div style="position:absolute;left:315px;top:934px;width:2px;height:22px;background:#8a8a8a;"></div><div style="position:absolute;left:86px;top:184.40px;font-size:14px;line-height:14px;color:#1c1c24;white-space:nowrap;transform:scaleX(0.9413);transform-origin:0 0;">Automatic Water Pump</div><div style="position:absolute;left:107.5px;top:205.65px;font-size:14px;line-height:14px;color:#1c1c24;white-space:nowrap;transform:scaleX(0.9385);transform-origin:0 0;">Network Configuration</div><div style="position:absolute;left:129.25px;top:226.90px;font-size:14px;line-height:14px;color:#1c1c24;white-space:nowrap;transform:scaleX(0.9470);transform-origin:0 0;">Undefined Network</div><div style="position:absolute;left:150px;top:248.15px;font-size:14px;line-height:14px;color:#1c1c24;white-space:nowrap;transform:scaleX(0.9470);transform-origin:0 0;">NewPLC [B0S0 Intern...</div><div style="position:absolute;left:107.5px;top:269.40px;font-size:14px;line-height:14px;color:#1c1c24;white-space:nowrap;transform:scaleX(0.9168);transform-origin:0 0;">System Variable</div><div style="position:absolute;left:108.25px;top:290.65px;font-size:14px;line-height:14px;color:#1c1c24;white-space:nowrap;transform:scaleX(1.0498);transform-origin:0 0;font-weight:bold;">NewPLC(XBC-DxxxE)-Of...</div><div style="position:absolute;left:129.2px;top:311.90px;font-size:14px;line-height:14px;color:#1c1c24;white-space:nowrap;transform:scaleX(0.9321);transform-origin:0 0;">Variable/Comment</div><div style="position:absolute;left:129.2px;top:333.15px;font-size:14px;line-height:14px;color:#1c1c24;white-space:nowrap;transform:scaleX(0.9042);transform-origin:0 0;">Parameter</div><div style="position:absolute;left:150.5px;top:354.40px;font-size:14px;line-height:14px;color:#1c1c24;white-space:nowrap;transform:scaleX(0.9209);transform-origin:0 0;">Basic Parameter</div><div style="position:absolute;left:150.5px;top:375.65px;font-size:14px;line-height:14px;color:#1c1c24;white-space:nowrap;transform:scaleX(0.9418);transform-origin:0 0;">I/O Parameter</div><div style="position:absolute;left:150.5px;top:396.90px;font-size:14px;line-height:14px;color:#1c1c24;white-space:nowrap;transform:scaleX(0.9228);transform-origin:0 0;">Internal Parameter</div><div style="position:absolute;left:129.2px;top:418.15px;font-size:14px;line-height:14px;color:#1c1c24;white-space:nowrap;transform:scaleX(0.9175);transform-origin:0 0;">Scan Program</div><div style="position:absolute;left:150.5px;top:439.40px;font-size:14px;line-height:14px;color:#1c1c24;white-space:nowrap;transform:scaleX(0.9119);transform-origin:0 0;">NewProgram</div><svg style="left:62px;top:182.8px" width="20" height="20"><rect x="2.5" y="0.8" width="14" height="3" fill="#9cd0f0" stroke="#111" stroke-width="1.3"/><rect x="8.5" y="3.5" width="2" height="4" fill="#111"/><path d="M4 7.5H15" stroke="#111" stroke-width="1.3"/><ellipse cx="4" cy="10" rx="3.3" ry="2.3" fill="#8c8" stroke="#111" stroke-width="1.3"/><ellipse cx="15" cy="10" rx="3.3" ry="2.3" fill="#cc6" stroke="#111" stroke-width="1.3"/><rect x="8.5" y="7" width="2" height="6" fill="#111"/><rect x="4" y="13" width="11" height="4.5" rx="1.5" fill="#4cc8d0" stroke="#111" stroke-width="1.3"/><path d="M11 14V17" stroke="#111"/></svg><svg style="left:84px;top:204.0px" width="20" height="20"><rect x="2.5" y="0.8" width="14" height="3" fill="#9cd0f0" stroke="#111" stroke-width="1.3"/><rect x="8.5" y="3.5" width="2" height="4" fill="#111"/><path d="M4 7.5H15" stroke="#111" stroke-width="1.3"/><ellipse cx="4" cy="10" rx="3.3" ry="2.3" fill="#8c8" stroke="#111" stroke-width="1.3"/><ellipse cx="15" cy="10" rx="3.3" ry="2.3" fill="#cc6" stroke="#111" stroke-width="1.3"/><rect x="8.5" y="7" width="2" height="6" fill="#111"/><rect x="4" y="13" width="11" height="4.5" rx="1.5" fill="#4cc8d0" stroke="#111" stroke-width="1.3"/><path d="M11 14V17" stroke="#111"/></svg><svg style="left:106px;top:225.2px" width="20" height="20"><path d="M1.5 5.5L5 2H18.5L15 5.5Z" fill="#d8e8f4" stroke="#111" stroke-width="1.4"/><rect x="1.5" y="5.5" width="13.5" height="11.5" rx="1" fill="#c8dcf0" stroke="#111" stroke-width="1.4"/><path d="M15 5.5L18.5 2V13L15 17" fill="#8aa8c8" stroke="#111" stroke-width="1.4"/><rect x="5" y="8" width="2" height="8" fill="#fff"/><rect x="9" y="9" width="2" height="7" fill="#46a"/></svg><svg style="left:126px;top:246.5px" width="20" height="20"><rect x="4" y="1" width="8" height="7" rx="1" fill="#b8e0e8" stroke="#111" stroke-width="1.4"/><path d="M1 11L3 8H13L15 11Z" fill="#6aa8b8" stroke="#111" stroke-width="1.3"/><path d="M2 11.5V16.5H8M14 8V4H16" fill="none" stroke="#2a6ae0" stroke-width="1.3"/><rect x="8" y="13" width="11" height="5.5" rx="1.5" fill="#d8d890" stroke="#111" stroke-width="1.3"/><path d="M11 15V17M14 15V17" stroke="#111"/></svg><svg style="left:84px;top:267.8px" width="20" height="20"><circle cx="11" cy="12.5" r="6" fill="#38a870" stroke="#111" stroke-width="1.3"/><path d="M6 10Q11 14 16 9M8 17Q10 11 15 16" stroke="#e03080" fill="none" stroke-width="1.3"/><circle cx="13" cy="13" r="2" fill="#3070e0"/><rect x="0.8" y="0.8" width="8" height="6" fill="#fff" stroke="#a020f0" stroke-width="1.3"/><path d="M2.5 2.2L4.8 5L7 2.2" stroke="#e03080" fill="none"/></svg><svg style="left:84px;top:289.0px" width="20" height="20"><path d="M1.5 5.5L5 2H18.5L15 5.5Z" fill="#d8e8f4" stroke="#111" stroke-width="1.4"/><rect x="1.5" y="5.5" width="13.5" height="11.5" rx="1" fill="#c8dcf0" stroke="#111" stroke-width="1.4"/><path d="M15 5.5L18.5 2V13L15 17" fill="#8aa8c8" stroke="#111" stroke-width="1.4"/><rect x="5" y="8" width="2" height="8" fill="#fff"/><rect x="9" y="9" width="2" height="7" fill="#46a"/></svg><svg style="left:106px;top:310.2px" width="20" height="20"><rect x="3.5" y="4.5" width="15" height="10" fill="#c8daf0" stroke="#111" stroke-width="1.4"/><path d="M6 13L16 6" stroke="#fff" stroke-width="2"/><path d="M5 15V18M8 15V18M11 15V18M14 15V18M17 15V18" stroke="#111" stroke-width="1.5"/><rect x="16" y="2" width="2.5" height="3" fill="#111"/><rect x="0.8" y="0.8" width="7" height="5.5" fill="#fff" stroke="#2a2" stroke-width="1.3"/><path d="M2 2L4.2 4.5L6.5 2" stroke="#e33" stroke-width="1.2" fill="none"/></svg><svg style="left:106px;top:331.5px" width="20" height="20"><rect x="0.5" y="1.5" width="14" height="14" fill="#e6eef8" stroke="#222" stroke-width="1.3"/><path d="M10 7V12M12 8V13M8 9V13M8 13Q9 17 12 17Q15 17 15 13V9" fill="#f5d6b0" stroke="#222"/></svg><svg style="left:126px;top:352.8px" width="20" height="20"><path d="M0.5 4V0.5H4M14 0.5H17.5V4M17.5 14V17.5H14M4 17.5H0.5V14" fill="none" stroke="#2a2" stroke-width="1.3"/><rect x="3" y="3" width="13" height="12" fill="#c9d7e8" stroke="#222" stroke-width="1.3"/><rect x="6" y="6" width="7" height="7" fill="none" stroke="#222"/><path d="M9 6V10H13" fill="none" stroke="#222"/></svg><svg style="left:126px;top:374.0px" width="20" height="20"><path d="M0.5 4V0.5H4M14 0.5H17.5V4M17.5 14V17.5H14M4 17.5H0.5V14" fill="none" stroke="#2a2" stroke-width="1.3"/><rect x="3" y="3" width="13" height="12" fill="#c9d7e8" stroke="#222" stroke-width="1.3"/><path d="M5 6L9 9" stroke="#c33" stroke-width="1.5"/><rect x="11.5" y="7.5" width="4" height="5" fill="#fff" stroke="#222"/></svg><svg style="left:126px;top:395.2px" width="20" height="20"><path d="M0.5 4V0.5H4M14 0.5H17.5V4M17.5 14V17.5H14M4 17.5H0.5V14" fill="none" stroke="#2a2" stroke-width="1.3"/><rect x="3" y="3" width="13" height="12" fill="#c9d7e8" stroke="#222" stroke-width="1.3"/><path d="M5 5L15 15M15 5L5 15" stroke="#c33"/><rect x="7.5" y="7.5" width="5" height="5" fill="#fff" stroke="#222"/></svg><svg style="left:106px;top:416.5px" width="20" height="20"><rect x="4.5" y="1.5" width="13" height="12" fill="#dde" stroke="#222"/><rect x="5" y="0.5" width="6" height="2" fill="#2a2"/><rect x="0.5" y="4.5" width="14" height="13" fill="#cfe4f4" stroke="#222"/><path d="M4 12Q7 7 11 10" fill="none" stroke="#2a2" stroke-width="1.5"/><rect x="2" y="3.5" width="5" height="1.5" fill="#c33"/></svg><svg style="left:126px;top:437.8px" width="20" height="20"><rect x="0.5" y="2.5" width="17" height="15" fill="#f6dede" stroke="#222"/><rect x="2" y="1" width="6" height="2" fill="#c33"/><path d="M3 7H15M3 13H15M7 5V15M11 5V15" stroke="#444" stroke-dasharray="1.5 1.5"/></svg><svg style="left:0;top:0" width="1920" height="1028"><path d="M52.0 187.25 V193.75 H45.5 Z" fill="#595959"/><line x1="69.5" y1="202.25" x2="69.5" y2="206.75" stroke="#a6a6a6" stroke-width="1"/><line x1="69.5" y1="217" x2="69.5" y2="291.5" stroke="#a6a6a6" stroke-width="1"/><path d="M73.5 208.5 V215.0 H67 Z" fill="#595959"/><line x1="74" y1="213.0" x2="80" y2="213.0" stroke="#a6a6a6" stroke-width="1"/><line x1="69.5" y1="276.75" x2="80" y2="276.75" stroke="#a6a6a6" stroke-width="1"/><path d="M73.5 293.5 V300.0 H67 Z" fill="#595959"/><line x1="74" y1="298.0" x2="80" y2="298.0" stroke="#a6a6a6" stroke-width="1"/><line x1="90.5" y1="220.5" x2="90.5" y2="230.75" stroke="#a6a6a6" stroke-width="1"/><path d="M94.5 229.75 V236.25 H88 Z" fill="#595959"/><line x1="95" y1="234.25" x2="101" y2="234.25" stroke="#a6a6a6" stroke-width="1"/><line x1="111.5" y1="241.75" x2="111.5" y2="255.5" stroke="#a6a6a6" stroke-width="1"/><line x1="111.5" y1="255.5" x2="122.5" y2="255.5" stroke="#a6a6a6" stroke-width="1"/><line x1="90.5" y1="305.5" x2="90.5" y2="422.0" stroke="#a6a6a6" stroke-width="1"/><line x1="90.5" y1="319.25" x2="101" y2="319.25" stroke="#a6a6a6" stroke-width="1"/><path d="M94.5 336.0 V342.5 H88 Z" fill="#595959"/><line x1="95" y1="340.5" x2="101" y2="340.5" stroke="#a6a6a6" stroke-width="1"/><line x1="111.5" y1="348.0" x2="111.5" y2="398.75" stroke="#a6a6a6" stroke-width="1"/><line x1="111.5" y1="361.75" x2="122.5" y2="361.75" stroke="#a6a6a6" stroke-width="1"/><line x1="111.5" y1="383.0" x2="122.5" y2="383.0" stroke="#a6a6a6" stroke-width="1"/><path d="M108.5 399.75 L114 404.25 L108.5 408.75 Z" fill="#fff" stroke="#8a8a8a" stroke-width="1"/><line x1="116" y1="404.25" x2="122.5" y2="404.25" stroke="#a6a6a6" stroke-width="1"/><path d="M94.5 421.0 V427.5 H88 Z" fill="#595959"/><line x1="95" y1="425.5" x2="101" y2="425.5" stroke="#a6a6a6" stroke-width="1"/><line x1="111.5" y1="433.0" x2="111.5" y2="446.75" stroke="#a6a6a6" stroke-width="1"/><line x1="111.5" y1="446.75" x2="122.5" y2="446.75" stroke="#a6a6a6" stroke-width="1"/></svg><svg style="left:20px;top:64px" width="22" height="22"><path d="M1 1H9.5L13 4.5V16H1Z" fill="#fff" stroke="#000" stroke-width="1.6" stroke-linejoin="round"/><path d="M9.5 1V4.5H13" fill="none" stroke="#000" stroke-width="1"/></svg><svg style="left:45px;top:64px" width="22" height="22"><path d="M1 5H5L6 6.5H13V9H4.5L1 15Z" fill="#e8e840" stroke="#000" stroke-width="1.2"/><path d="M4.5 8.5H18.5L14.5 16H1Z" fill="#8a8a00" stroke="#000" stroke-width="1.3"/><path d="M11 3Q14 -0.5 17 3" fill="none" stroke="#000" stroke-width="1.3"/><path d="M16 2L18.5 4.5L15.5 5Z" fill="#000"/></svg><svg style="left:74px;top:63px" width="22" height="22"><rect x="1" y="5" width="12" height="13" fill="#dde8f4" stroke="#000" stroke-width="1.4"/><rect x="3" y="3" width="5" height="2" fill="#a33"/><rect x="6" y="1" width="5" height="2" fill="#2b6"/><rect x="8" y="3.5" width="8" height="10" fill="#bcd" stroke="#000"/><path d="M9 10L13 6V10Z" fill="#d33"/><rect x="7" y="12" width="11" height="6" fill="#000"/><rect x="8.5" y="13" width="3.5" height="3.5" fill="#cf6"/><rect x="13" y="13" width="2" height="3.5" fill="#cf6"/><rect x="16" y="13" width="1.5" height="3.5" fill="#cf6"/></svg><svg style="left:100px;top:63px" width="22" height="22"><rect x="1" y="1" width="16" height="17" fill="#8c8c00" stroke="#000" stroke-width="1.6"/><rect x="4" y="1.5" width="10" height="8" fill="#d8dce8"/><rect x="3.5" y="12" width="11" height="6" fill="#000"/><rect x="11" y="13" width="2" height="4" fill="#fff"/></svg><svg style="left:126px;top:63px" width="22" height="22"><path d="M5 1.5H16L14 7H3Z" fill="#eee" stroke="#000" stroke-width="1.3"/><rect x="1" y="7" width="18" height="9" rx="2" fill="#ccc" stroke="#000" stroke-width="1.4"/><rect x="2" y="10" width="16" height="2" fill="#fff"/><rect x="9" y="12" width="4" height="1.5" fill="#dd3"/><rect x="3" y="16" width="14" height="2" fill="#888" stroke="#000" stroke-width="0.8"/></svg><div style="position:absolute;left:155px;top:61px;width:1px;height:25px;background:#b8c0cf;"></div><svg style="left:164px;top:63px" width="22" height="22"><rect x="1.5" y="4.5" width="17" height="12" rx="2" fill="#e4e4e4" stroke="#a0a0a0" stroke-width="1.2"/><path d="M7 4.5L10 1.5L13 4.5" fill="#ddd" stroke="#a0a0a0"/><rect x="5" y="10" width="10" height="2" fill="#b0b0b0"/></svg><div style="position:absolute;left:193px;top:61px;width:1px;height:25px;background:#b8c0cf;"></div><svg style="left:201px;top:63px" width="22" height="22"><rect x="3" y="1" width="8" height="8" fill="#9cd4f0" stroke="#000"/><rect x="1" y="9" width="12" height="3" fill="#5ab" stroke="#000"/><path d="M4 12V17H17V5H13" fill="none" stroke="#3a80e0" stroke-width="1.3"/><rect x="9" y="14" width="10" height="5" fill="#000"/><rect x="10" y="15" width="3" height="3" fill="#cf6"/><rect x="14" y="15" width="4" height="3" fill="#cf6"/></svg><svg style="left:229px;top:63px" width="22" height="22"><path d="M1 6Q1 3 5 3H16Q18 3 18 7V12H3Q1 12 1 9Z" fill="#cfe8b0" stroke="#000" stroke-width="1.2"/><path d="M7 3L9 0.5L12 3Z" fill="#d8a" stroke="#000" stroke-width="0.8"/><path d="M3 12Q6 17 11 16L16 14" fill="#f5d8b8" stroke="#000" stroke-width="1.2"/><rect x="16" y="10" width="2.5" height="8" fill="#d22"/></svg><div style="position:absolute;left:258px;top:61px;width:1px;height:25px;background:#b8c0cf;"></div><svg style="left:266px;top:64px" width="22" height="22"><rect x="0.5" y="1" width="19" height="15" fill="#000"/><rect x="1" y="2" width="2" height="13" fill="#2ee"/><rect x="3" y="3" width="1.5" height="11" fill="#e2e"/><rect x="6" y="3" width="1.8" height="1.8" fill="#e22"/><rect x="6" y="6" width="1.8" height="1.8" fill="#2c2"/><rect x="6" y="9" width="1.8" height="1.8" fill="#2c2"/><rect x="6" y="12" width="1.8" height="1.8" fill="#e22"/><rect x="9" y="3" width="1.8" height="1.8" fill="#2c2"/><rect x="9" y="6" width="1.8" height="1.8" fill="#2c2"/><rect x="9" y="9" width="1.8" height="1.8" fill="#e22"/><rect x="9" y="12" width="1.8" height="1.8" fill="#2c2"/><rect x="12" y="3" width="1.8" height="1.8" fill="#2c2"/><rect x="12" y="6" width="1.8" height="1.8" fill="#e22"/><rect x="12" y="9" width="1.8" height="1.8" fill="#2c2"/><rect x="12" y="12" width="1.8" height="1.8" fill="#2c2"/><rect x="15" y="3" width="1.8" height="1.8" fill="#e22"/><rect x="15" y="6" width="1.8" height="1.8" fill="#2c2"/><rect x="15" y="9" width="1.8" height="1.8" fill="#2c2"/><rect x="15" y="12" width="1.8" height="1.8" fill="#e22"/><rect x="18" y="3" width="1.8" height="1.8" fill="#2c2"/><rect x="18" y="6" width="1.8" height="1.8" fill="#2c2"/><rect x="18" y="9" width="1.8" height="1.8" fill="#e22"/><rect x="18" y="12" width="1.8" height="1.8" fill="#2c2"/></svg><svg style="left:294px;top:63px" width="22" height="22"><circle cx="10" cy="10" r="8" fill="none" stroke="#45b8f0" stroke-width="3.5"/><path d="M10 2A8 8 0 0 1 16 15" fill="none" stroke="#e8559a" stroke-width="3.5"/><circle cx="10" cy="10" r="2.5" fill="#777"/><rect x="9" y="2" width="2" height="6" fill="#777"/></svg><div style="position:absolute;left:323px;top:61px;width:1px;height:25px;background:#b8c0cf;"></div><svg style="left:331px;top:63px" width="22" height="22"><path d="M10 1.5C4.5 1.5 1.5 4 1.5 7.5C1.5 10.5 4 12.5 7 13L5 17.5L10.5 13.5C15.5 13.5 18.5 11 18.5 7.5C18.5 4 15.5 1.5 10 1.5Z" fill="#f8e880" stroke="#000" stroke-width="1.3"/><text x="7" y="12" font-size="11" font-weight="bold" fill="#e03030" font-family="Liberation Sans">?</text></svg><svg style="left:360px;top:63px" width="22" height="22"><rect x="1" y="1" width="9" height="12" fill="#e8e8e8" stroke="#aaa"/><rect x="5" y="4" width="12" height="13" rx="3" fill="#eee" stroke="#999"/><circle cx="9" cy="9" r="1" fill="#999"/><circle cx="13" cy="9" r="1" fill="#999"/><path d="M8.5 12Q11 14 13.5 12" fill="none" stroke="#999"/><path d="M14 15L18 19" stroke="#999" stroke-width="1.2"/></svg><svg style="left:387px;top:64px" width="22" height="22"><rect x="0.5" y="0.5" width="19" height="18" fill="#2e4a8c"/><text x="1.5" y="15" font-size="9" fill="#bcd0f0" font-family="Liberation Sans">SSO</text></svg><svg style="left:428px;top:63px" width="22" height="22"><path d="M5 7Q10 1 15 5Q19 9 14 13" fill="none" stroke="#909090" stroke-width="1.3"/><path d="M2 4L7 4L4 9Z" fill="#909090"/><rect x="1" y="14" width="11" height="2" fill="#888"/><rect x="13" y="14" width="1" height="2" fill="#888"/><rect x="15" y="14" width="1" height="2" fill="#888"/><rect x="17" y="14" width="1" height="2" fill="#888"/></svg><svg style="left:456px;top:63px" width="22" height="22"><path d="M15 7Q10 1 5 5Q1 9 6 13" fill="none" stroke="#909090" stroke-width="1.3"/><path d="M18 4L13 4L16 9Z" fill="#909090"/><rect x="8" y="14" width="11" height="2" fill="#888"/><rect x="2" y="14" width="1" height="2" fill="#888"/><rect x="4" y="14" width="1" height="2" fill="#888"/><rect x="6" y="14" width="1" height="2" fill="#888"/></svg><svg style="left:486px;top:63px" width="22" height="22"><path d="M3 1L8 11M11 1L6 11" stroke="#a0a0a0" stroke-width="1.2"/><circle cx="4" cy="14.5" r="2.5" fill="none" stroke="#a0a0a0" stroke-width="1.2"/><circle cx="10" cy="14.5" r="2.5" fill="none" stroke="#a0a0a0" stroke-width="1.2"/></svg><svg style="left:511px;top:63px" width="22" height="22"><path d="M1 1H7L9 3V11H1Z" fill="#eee" stroke="#a0a0a0"/><path d="M9 5H15L18 8V17H9Z" fill="#eee" stroke="#a0a0a0"/><path d="M11 10H16M11 12H16M11 14H16M3 5H7M3 7H7" stroke="#b0b0b0"/></svg><svg style="left:539px;top:63px" width="22" height="22"><rect x="1" y="3" width="15" height="14" rx="1.5" fill="#cfcfcf" stroke="#a0a0a0"/><path d="M5 3L8.5 0.5L12 3" fill="#ddd" stroke="#999"/><rect x="9" y="9" width="9" height="9" fill="#eee" stroke="#a0a0a0"/><path d="M11 13H16M11 15H16" stroke="#aaa"/></svg><svg style="left:567px;top:63px" width="22" height="22"><path d="M2 2L15 15M14 1L2 16" stroke="#a01010" stroke-width="2.8" stroke-linecap="round"/></svg><div style="position:absolute;left:595px;top:61px;width:1px;height:25px;background:#b8c0cf;"></div><svg style="left:603px;top:63px" width="22" height="22"><rect x="1.5" y="6.5" width="4" height="4" fill="none" stroke="#000" stroke-width="1.3"/><rect x="12" y="1.5" width="6" height="3.5" fill="none" stroke="#000" stroke-width="1.3"/><rect x="12" y="12.5" width="6" height="3.5" fill="none" stroke="#000" stroke-width="1.3"/><path d="M6 8.5H10" stroke="#f0f" stroke-width="1.6"/><path d="M9 5.5L12.5 8.5L9 11.5Z" fill="#f0f"/></svg><svg style="left:631px;top:63px" width="22" height="22"><rect x="1.5" y="6.5" width="4" height="4" fill="none" stroke="#aaa" stroke-width="1.2"/><rect x="12" y="1.5" width="6" height="3.5" fill="none" stroke="#aaa" stroke-width="1.2"/><path d="M6 8.5H11" stroke="#bbb" stroke-width="1.5"/></svg><svg style="left:658px;top:63px" width="22" height="22"><rect x="1.5" y="1.5" width="6" height="3.5" fill="none" stroke="#000" stroke-width="1.3"/><rect x="1.5" y="7.5" width="6" height="3.5" fill="none" stroke="#000" stroke-width="1.3"/><rect x="1.5" y="13" width="6" height="3.5" fill="none" stroke="#000" stroke-width="1.3"/><path d="M7 3L17 15M16 3L7 15" stroke="#a01010" stroke-width="1.8"/></svg><svg style="left:686px;top:63px" width="22" height="22"><rect x="5.5" y="1.5" width="6" height="3" fill="none" stroke="#000" stroke-width="1.3"/><rect x="1.5" y="12" width="3.5" height="3.5" fill="none" stroke="#000" stroke-width="1.3"/><rect x="14" y="12" width="3.5" height="3.5" fill="none" stroke="#000" stroke-width="1.3"/><path d="M6.5 7H11L8.7 10Z" fill="#f0f"/></svg><svg style="left:713px;top:63px" width="22" height="22"><rect x="1.5" y="1.5" width="3.5" height="3.5" fill="none" stroke="#000" stroke-width="1.3"/><rect x="15" y="1.5" width="3.5" height="3.5" fill="none" stroke="#000" stroke-width="1.3"/><rect x="6" y="4.5" width="7" height="3" fill="none" stroke="#000"/><path d="M4 8L14 17M14 8L4 17" stroke="#a01010" stroke-width="1.8"/></svg><svg style="left:756px;top:65px" width="22" height="22"><path d="M3 0H7V4L9 6V16H0V7L3 4Z" fill="#000"/><path d="M12 0H16V4L19 7V16H10V6L12 4Z" fill="#000"/><rect x="8.5" y="7" width="2" height="4" fill="#000"/><rect x="2.5" y="11" width="1.5" height="2.5" fill="#fff"/><rect x="14.5" y="11" width="1.5" height="2.5" fill="#fff"/><rect x="4" y="6" width="1.2" height="3" fill="#ccc"/><rect x="13" y="6" width="1.2" height="3" fill="#ccc"/><text x="-1" y="17.5" font-size="13" font-weight="bold" fill="#f00" font-family="Liberation Serif">D</text></svg><svg style="left:784px;top:65px" width="22" height="22"><path d="M3 0H7V4L9 6V16H0V7L3 4Z" fill="#000"/><path d="M12 0H16V4L19 7V16H10V6L12 4Z" fill="#000"/><rect x="8.5" y="7" width="2" height="4" fill="#000"/><rect x="2.5" y="11" width="1.5" height="2.5" fill="#fff"/><rect x="14.5" y="11" width="1.5" height="2.5" fill="#fff"/><rect x="4" y="6" width="1.2" height="3" fill="#ccc"/><rect x="13" y="6" width="1.2" height="3" fill="#ccc"/></svg><svg style="left:811px;top:63px" width="22" height="22"><text x="0" y="8" font-size="10.5" fill="#9018b0" font-family="Liberation Sans">a</text><path d="M7 4.5H10" stroke="#000" stroke-width="1.6"/><path d="M9.5 2L12.5 4.5L9.5 7Z" fill="#000"/><text x="13.5" y="8" font-size="10.5" fill="#9018b0" font-family="Liberation Sans">0</text><g transform="translate(9,9) scale(0.5,0.6)"><path d="M3 0H7V4L9 6V16H0V7L3 4Z" fill="#000"/><path d="M12 0H16V4L19 7V16H10V6L12 4Z" fill="#000"/><rect x="8.5" y="7" width="2" height="4" fill="#000"/><rect x="2.5" y="11" width="1.5" height="2.5" fill="#fff"/><rect x="14.5" y="11" width="1.5" height="2.5" fill="#fff"/><rect x="4" y="6" width="1.2" height="3" fill="#ccc"/><rect x="13" y="6" width="1.2" height="3" fill="#ccc"/></g><text x="-0.5" y="19.5" font-size="12" font-weight="bold" fill="#f00" font-family="Liberation Serif">D</text></svg><svg style="left:839px;top:63px" width="22" height="22"><text x="0" y="8" font-size="10.5" fill="#9018b0" font-family="Liberation Sans">a</text><path d="M7 4.5H10" stroke="#000" stroke-width="1.6"/><path d="M9.5 2L12.5 4.5L9.5 7Z" fill="#000"/><text x="13.5" y="8" font-size="10.5" fill="#9018b0" font-family="Liberation Sans">0</text><g transform="translate(3,9) scale(0.65,0.6)"><path d="M3 0H7V4L9 6V16H0V7L3 4Z" fill="#000"/><path d="M12 0H16V4L19 7V16H10V6L12 4Z" fill="#000"/><rect x="8.5" y="7" width="2" height="4" fill="#000"/><rect x="2.5" y="11" width="1.5" height="2.5" fill="#fff"/><rect x="14.5" y="11" width="1.5" height="2.5" fill="#fff"/><rect x="4" y="6" width="1.2" height="3" fill="#ccc"/><rect x="13" y="6" width="1.2" height="3" fill="#ccc"/></g></svg><svg style="left:867px;top:64px" width="22" height="22"><g transform="translate(0,5) scale(0.75,0.7)"><path d="M3 0H7V4L9 6V16H0V7L3 4Z" fill="#a0a0a0"/><path d="M12 0H16V4L19 7V16H10V6L12 4Z" fill="#a0a0a0"/><rect x="8.5" y="7" width="2" height="4" fill="#a0a0a0"/><rect x="2.5" y="11" width="1.5" height="2.5" fill="#fff"/><rect x="14.5" y="11" width="1.5" height="2.5" fill="#fff"/><rect x="4" y="6" width="1.2" height="3" fill="#ccc"/><rect x="13" y="6" width="1.2" height="3" fill="#ccc"/></g><path d="M5 6Q9 0 15 4" fill="none" stroke="#aaa" stroke-width="1.2"/><path d="M13 2L17 4L14 6Z" fill="#aaa"/></svg><svg style="left:894px;top:62px" width="22" height="22"><text x="9" y="9" font-size="9" fill="#000" font-family="Liberation Sans">10</text><text x="9" y="19" font-size="9" fill="#000" font-family="Liberation Sans">11</text><path d="M1 15H7" stroke="#000090" stroke-width="1.3"/><path d="M6 12.5L9 15L6 17.5Z" fill="#000090"/></svg><svg style="left:925px;top:66px" width="22" height="22"><path d="M13 7H4" stroke="#023" stroke-width="2.5"/><path d="M7 2L1.5 7L7 12" fill="none" stroke="#012" stroke-width="2.5"/></svg><svg style="left:952px;top:66px" width="22" height="22"><path d="M0 7H9" stroke="#8a8a8a" stroke-width="2.3"/><path d="M6 2L11.5 7L6 12" fill="none" stroke="#8a8a8a" stroke-width="2.3"/></svg><svg style="left:16px;top:94px" width="22" height="22"><rect x="5" y="5" width="11" height="10" rx="2" fill="#ddd" stroke="#a8a8a8" stroke-width="1.3"/><path d="M8 7V13M10.5 7V13M13 7V13" stroke="#a8a8a8"/><path d="M2 4L4 1M18 4L16 1M2 16L4 19M18 16L16 19" stroke="#bbb" stroke-width="1.3"/></svg><svg style="left:44px;top:94px" width="22" height="22"><path d="M3 5Q5 1 8 5Z" fill="#ddd" stroke="#a8a8a8"/><rect x="1" y="5" width="8" height="2" fill="#ddd" stroke="#a8a8a8"/><rect x="4" y="9" width="15" height="9" rx="1.5" fill="#ddd" stroke="#a8a8a8" stroke-width="1.2"/><path d="M8 11V16M12 11V16M15 11V16" stroke="#a8a8a8" stroke-width="1.3"/><path d="M11 3Q16 2 15 7" fill="none" stroke="#bbb" stroke-width="1.2"/></svg><div style="position:absolute;left:73px;top:92px;width:1px;height:25px;background:#b8c0cf;"></div><svg style="left:81px;top:94px" width="22" height="22"><circle cx="10" cy="10" r="9" fill="#e8e8e8" stroke="#bdbdbd" stroke-width="1.3"/><path d="M8 5.5L14 10L8 14.5Z" fill="#bbb"/></svg><svg style="left:109px;top:94px" width="22" height="22"><circle cx="10" cy="10" r="9" fill="#e8e8e8" stroke="#bdbdbd" stroke-width="1.3"/><rect x="6.5" y="6.5" width="7" height="7" fill="#bbb"/></svg><svg style="left:136px;top:94px" width="22" height="22"><circle cx="10" cy="10" r="9" fill="#e8e8e8" stroke="#bdbdbd" stroke-width="1.3"/><path d="M6 6L14 14M14 6L6 14" stroke="#c4c4c4" stroke-width="1.5"/></svg><div style="position:absolute;left:165px;top:92px;width:1px;height:25px;background:#b8c0cf;"></div><svg style="left:176px;top:94px" width="22" height="22"><rect x="2" y="2" width="15" height="15" rx="1" fill="#e2e2e2" stroke="#b8b8b8" stroke-width="1.2"/><path d="M5 6H14M5 10H14M5 14H14" stroke="#c8c8c8"/></svg><svg style="left:204px;top:94px" width="22" height="22"><rect x="2" y="2" width="15" height="15" rx="1" fill="#e2e2e2" stroke="#b8b8b8" stroke-width="1.2"/><path d="M5 6H14M5 10H14M5 14H14" stroke="#c8c8c8"/></svg><svg style="left:240px;top:94px" width="22" height="22"><rect x="2" y="2" width="15" height="15" rx="1" fill="#e2e2e2" stroke="#b8b8b8" stroke-width="1.2"/><path d="M5 6H14M5 10H14M5 14H14" stroke="#c8c8c8"/></svg><svg style="left:268px;top:94px" width="22" height="22"><rect x="2" y="2" width="15" height="15" rx="1" fill="#e2e2e2" stroke="#b8b8b8" stroke-width="1.2"/><path d="M5 6H14M5 10H14M5 14H14" stroke="#c8c8c8"/></svg><svg style="left:296px;top:94px" width="22" height="22"><rect x="2" y="2" width="15" height="15" rx="1" fill="#e2e2e2" stroke="#b8b8b8" stroke-width="1.2"/><path d="M5 6H14M5 10H14M5 14H14" stroke="#c8c8c8"/></svg><svg style="left:338px;top:94px" width="22" height="22"><rect x="2" y="2" width="15" height="15" rx="1" fill="#e2e2e2" stroke="#b8b8b8" stroke-width="1.2"/><path d="M5 6H14M5 10H14M5 14H14" stroke="#c8c8c8"/></svg><svg style="left:366px;top:94px" width="22" height="22"><rect x="2" y="2" width="15" height="15" rx="1" fill="#e2e2e2" stroke="#b8b8b8" stroke-width="1.2"/><path d="M5 6H14M5 10H14M5 14H14" stroke="#c8c8c8"/></svg><svg style="left:394px;top:94px" width="22" height="22"><rect x="2" y="2" width="15" height="15" rx="1" fill="#e2e2e2" stroke="#b8b8b8" stroke-width="1.2"/><path d="M5 6H14M5 10H14M5 14H14" stroke="#c8c8c8"/></svg><div style="position:absolute;left:230px;top:92px;width:1px;height:25px;background:#b8c0cf;"></div><div style="position:absolute;left:323px;top:92px;width:1px;height:25px;background:#b8c0cf;"></div><svg style="left:434px;top:94px" width="22" height="22"><rect x="2" y="2" width="14" height="15" fill="#e4e4e4" stroke="#b4b4b4" stroke-width="1.2"/></svg><svg style="left:460px;top:94px" width="22" height="22"><rect x="2" y="2" width="14" height="15" fill="#e4e4e4" stroke="#b4b4b4" stroke-width="1.2"/></svg><svg style="left:488px;top:94px" width="22" height="22"><rect x="2" y="1" width="12" height="8" fill="#fff" stroke="#222" stroke-width="1.5"/><rect x="6" y="2" width="1.5" height="5" fill="#e0e"/><rect x="9" y="2" width="1.5" height="5" fill="#e0e"/><circle cx="5" cy="15" r="2" fill="#4cd"/><circle cx="11" cy="15" r="2" fill="#4cd"/></svg><svg style="left:512px;top:94px" width="22" height="22"><rect x="3" y="3" width="12" height="12" fill="#e8e8e8" stroke="#b4b4b4" stroke-width="1.2"/><rect x="1" y="5" width="12" height="12" fill="#eee" stroke="#b4b4b4" stroke-width="1.2"/><path d="M11 12H18M16 10L18 12L16 14" stroke="#c0c0c0" stroke-width="1.3" fill="none"/></svg><svg style="left:539px;top:94px" width="22" height="22"><rect x="1" y="1" width="17" height="17" rx="1" fill="#e8e8e8" stroke="#b0b0b0" stroke-width="1.3"/><path d="M9.5 2V17" stroke="#b0b0b0"/><rect x="3" y="8" width="3" height="7" fill="none" stroke="#aaa"/></svg><svg style="left:566px;top:94px" width="22" height="22"><rect x="1" y="1" width="17" height="16" fill="#e8e8e8" stroke="#b0b0b0" stroke-width="1.3"/><rect x="4" y="6" width="11" height="6" fill="#f4f4f4" stroke="#aaa"/><rect x="6" y="4" width="2" height="2" fill="#aaa"/><rect x="11" y="4" width="2" height="2" fill="#aaa"/></svg><svg style="left:594px;top:94px" width="22" height="22"><rect x="3" y="1" width="12" height="16" fill="#e8e8e8" stroke="#b0b0b0" stroke-width="1.3"/><rect x="6" y="8" width="5" height="7" fill="none" stroke="#aaa"/><path d="M0 17L3 20M15 20L18 17" stroke="#ccc"/></svg><svg style="left:621px;top:94px" width="22" height="22"><rect x="1" y="1" width="18" height="17" fill="#f2f2f2" stroke="#c0c0c0"/><path d="M5 2V17M9 2V17M13 2V17M16 2V17" stroke="#a8a8a8" stroke-width="1.2"/><path d="M4 12H6M8 9H10M12 13H14" stroke="#888" stroke-width="1.5"/></svg><svg style="left:650px;top:94px" width="22" height="22"><rect x="1" y="1" width="17" height="17" fill="#e8e8e8" stroke="#b0b0b0" stroke-width="1.3"/><path d="M6 3V16M13 3V16" stroke="#aaa" stroke-width="2.5"/></svg><svg style="left:677px;top:94px" width="22" height="22"><rect x="1" y="1" width="8" height="8" fill="#a8a8a8"/><rect x="9" y="1" width="9" height="8" fill="#e8e8e8"/><rect x="1" y="9" width="17" height="9" fill="#c8c8c8"/></svg><svg style="left:704px;top:94px" width="22" height="22"><rect x="1" y="4" width="16" height="14" rx="1" fill="#eee" stroke="#aaa" stroke-width="1.2"/><path d="M4 10L7 13L12 7" stroke="#bbb" stroke-width="1.8" fill="none"/><path d="M11 10L17 2" stroke="#999" stroke-width="2"/></svg><svg style="left:731px;top:94px" width="22" height="22"><rect x="3" y="1" width="14" height="11" fill="#e6e6e6" stroke="#aaa" stroke-width="1.2"/><rect x="1" y="13" width="18" height="4" fill="#e6e6e6" stroke="#aaa" stroke-width="1.2"/><path d="M6 7L8 5L10 8L13 5" stroke="#bbb" fill="none"/></svg><svg style="left:773px;top:94px" width="22" height="22"><path d="M4 6H2V15H4M11 6H13V15H11" fill="none" stroke="#999" stroke-width="1.4"/><path d="M13 2H17V18H14" fill="none" stroke="#ccc"/><path d="M15 8L17 11L19 8" fill="#ccc"/></svg><svg style="left:800px;top:94px" width="22" height="22"><path d="M4 6H2V15H4M11 6H13V15H11" fill="none" stroke="#999" stroke-width="1.4"/><path d="M2 2H17V8" fill="none" stroke="#ccc"/><path d="M15 8L17 11L19 8" fill="#ccc"/></svg><svg style="left:828px;top:94px" width="22" height="22"><path d="M4 6H2V15H4M11 6H13V15H11" fill="none" stroke="#999" stroke-width="1.4"/><path d="M8 4V2H14V6" fill="none" stroke="#ccc"/></svg><svg style="left:855px;top:94px" width="22" height="22"><path d="M4 6H2V15H4M11 6H13V15H11" fill="none" stroke="#999" stroke-width="1.4"/><path d="M13 3H18V8" fill="none" stroke="#ccc"/><path d="M16 8L18 11L20 8" fill="#ccc"/></svg><svg style="left:884px;top:94px" width="22" height="22"><path d="M4 6H2V15H4M11 6H13V15H11" fill="none" stroke="#999" stroke-width="1.4"/><path d="M0 11H3" stroke="#ccc"/></svg><div style="position:absolute;left:913px;top:92px;width:1px;height:25px;background:#b8c0cf;"></div><svg style="left:921px;top:94px" width="22" height="22"><path d="M4 6H2V15H4M11 6H13V15H11" fill="none" stroke="#999" stroke-width="1.4"/><path d="M-1 2V14" stroke="#ccc" stroke-dasharray="1.5 1.5"/></svg><svg style="left:951px;top:94px" width="22" height="22"><rect x="3" y="2" width="11" height="15" fill="#f0f0f0" stroke="#a0a0a0" stroke-width="1.2"/><path d="M6 5H12M6 8H12M6 11H12M6 14H12" stroke="#aaa"/><path d="M15 4V18H5" stroke="#999" fill="none"/></svg><svg style="left:977px;top:94px" width="22" height="22"><path d="M1 2H11V9H7L5 12V9H1Z" fill="#f4f4f4" stroke="#aaa" stroke-width="1.2"/><path d="M3 4H9M3 6H9" stroke="#bbb"/><path d="M3 13V15H5M12 7H14V17H12" stroke="#999" fill="none" stroke-width="1.3"/></svg><div style="position:absolute;left:12.5px;top:122.9px;width:27.5px;height:25.69999999999999px;background:#fdf1c4;box-sizing:border-box;border:1px solid #e8c67c;"></div><svg style="left:19.5px;top:126.5px" width="14" height="13"><path d="M1 1H7L5.2 2.8L11.5 9.5L9.5 11.5L3 5L1 7Z" fill="#fff" stroke="#111" stroke-width="1.3" stroke-linejoin="round"/></svg><div style="position:absolute;left:16.9px;top:136.80px;font-size:13px;line-height:13px;color:#1c2850;white-space:nowrap;transform:scaleX(0.8860);transform-origin:0 0;">Esc</div><svg style="left:43px;top:127px" width="22" height="11"><path d="M0 4.5H4M16 4.5H20" stroke="#111" stroke-width="1.6"/><path d="M4.5 0.5V9M15.5 0.5V9" stroke="#111" stroke-width="2.2"/></svg><div style="position:absolute;left:46.4px;top:136.80px;font-size:13px;line-height:13px;color:#1c2850;white-space:nowrap;transform:scaleX(0.8964);transform-origin:0 0;">F3</div><svg style="left:71px;top:127px" width="22" height="11"><path d="M0 4.5H4M16 4.5H20" stroke="#111" stroke-width="1.6"/><path d="M4.5 0.5V9M15.5 0.5V9" stroke="#111" stroke-width="2.2"/><path d="M6 9L13 0.5" stroke="#111" stroke-width="1.4"/></svg><div style="position:absolute;left:74px;top:136.80px;font-size:13px;line-height:13px;color:#1c2850;white-space:nowrap;transform:scaleX(0.8569);transform-origin:0 0;">F4</div><svg style="left:99px;top:127px" width="22" height="11"><path d="M0 4.5H4M16 4.5H20" stroke="#111" stroke-width="1.6"/><path d="M4.5 0.5V9M15.5 0.5V9" stroke="#111" stroke-width="2.2"/><text x="10" y="9" font-size="10" text-anchor="middle" fill="#111" font-family="Liberation Sans">P</text></svg><div style="position:absolute;left:98.4px;top:136.80px;font-size:13px;line-height:13px;color:#1c2850;white-space:nowrap;transform:scaleX(0.9183);transform-origin:0 0;">sF1</div><svg style="left:126px;top:127px" width="22" height="11"><path d="M0 4.5H4M16 4.5H20" stroke="#111" stroke-width="1.6"/><path d="M4.5 0.5V9M15.5 0.5V9" stroke="#111" stroke-width="2.2"/><text x="10" y="9" font-size="10" text-anchor="middle" fill="#111" font-family="Liberation Sans">N</text></svg><div style="position:absolute;left:126px;top:136.80px;font-size:13px;line-height:13px;color:#1c2850;white-space:nowrap;transform:scaleX(0.9229);transform-origin:0 0;">sF2</div><svg style="left:154px;top:127px" width="22" height="11"><path d="M0 9H5V1H13V9H20" fill="none" stroke="#999" stroke-width="1.4"/><path d="M5 6L7 2L9 6" fill="none" stroke="#999"/></svg><div style="position:absolute;left:155.5px;top:136.80px;font-size:13px;line-height:13px;color:#a4a8b8;white-space:nowrap;transform:scaleX(0.9327);transform-origin:0 0;">aR</div><svg style="left:181px;top:127px" width="22" height="11"><path d="M0 9H5V1H13V9H20" fill="none" stroke="#999" stroke-width="1.4"/><path d="M11 4L13 8L15 4" fill="none" stroke="#999"/></svg><div style="position:absolute;left:183.5px;top:136.80px;font-size:13px;line-height:13px;color:#a4a8b8;white-space:nowrap;transform:scaleX(0.8239);transform-origin:0 0;">aF</div><svg style="left:210px;top:127px" width="22" height="11"><path d="M0 4.5H17" stroke="#111" stroke-width="1.6"/></svg><div style="position:absolute;left:211px;top:136.80px;font-size:13px;line-height:13px;color:#1c2850;white-space:nowrap;transform:scaleX(0.9228);transform-origin:0 0;">F5</div><svg style="left:238px;top:127px" width="22" height="11"><path d="M8.5 0V9" stroke="#111" stroke-width="1.6"/></svg><div style="position:absolute;left:238.75px;top:136.80px;font-size:13px;line-height:13px;color:#1c2850;white-space:nowrap;transform:scaleX(0.9063);transform-origin:0 0;">F6</div><svg style="left:265px;top:127px" width="22" height="11"><path d="M0 4.5H16" stroke="#111" stroke-width="1.5"/><path d="M11 0.5L16 4.5L11 8.5M14 0.5L19 4.5L14 8.5" fill="none" stroke="#111" stroke-width="1.2"/></svg><div style="position:absolute;left:263.75px;top:136.80px;font-size:13px;line-height:13px;color:#1c2850;white-space:nowrap;transform:scaleX(0.8883);transform-origin:0 0;">sF8</div><svg style="left:294px;top:127px" width="22" height="11"><path d="M0 4.5H14M7 0V9M2 1L12 8M12 1L2 8" stroke="#111" stroke-width="1.2"/></svg><div style="position:absolute;left:291px;top:136.80px;font-size:13px;line-height:13px;color:#1c2850;white-space:nowrap;transform:scaleX(0.9044);transform-origin:0 0;">sF9</div><svg style="left:319px;top:127px" width="22" height="11"><path d="M0 4.5H3M17 4.5H20" stroke="#111" stroke-width="1.5"/><path d="M5.5 0Q3 4.5 5.5 9M14.5 0Q17 4.5 14.5 9" fill="none" stroke="#111" stroke-width="1.5"/></svg><div style="position:absolute;left:321px;top:136.80px;font-size:13px;line-height:13px;color:#1c2850;white-space:nowrap;transform:scaleX(0.9228);transform-origin:0 0;">F9</div><svg style="left:346px;top:127px" width="22" height="11"><path d="M0 4.5H3M17 4.5H20" stroke="#111" stroke-width="1.5"/><path d="M5.5 0Q3 4.5 5.5 9M14.5 0Q17 4.5 14.5 9" fill="none" stroke="#111" stroke-width="1.5"/><path d="M7 9L13 0.5" stroke="#111" stroke-width="1.3"/></svg><div style="position:absolute;left:346.9px;top:136.80px;font-size:13px;line-height:13px;color:#1c2850;white-space:nowrap;transform:scaleX(0.8443);transform-origin:0 0;">F11</div><svg style="left:374px;top:127px" width="22" height="11"><path d="M0 4.5H3M17 4.5H20" stroke="#111" stroke-width="1.5"/><path d="M5.5 0Q3 4.5 5.5 9M14.5 0Q17 4.5 14.5 9" fill="none" stroke="#111" stroke-width="1.5"/><text x="10" y="9" font-size="10" text-anchor="middle" fill="#111" font-family="Liberation Sans">S</text></svg><div style="position:absolute;left:373.75px;top:136.80px;font-size:13px;line-height:13px;color:#1c2850;white-space:nowrap;transform:scaleX(0.9229);transform-origin:0 0;">sF3</div><svg style="left:401px;top:127px" width="22" height="11"><path d="M0 4.5H3M17 4.5H20" stroke="#111" stroke-width="1.5"/><path d="M5.5 0Q3 4.5 5.5 9M14.5 0Q17 4.5 14.5 9" fill="none" stroke="#111" stroke-width="1.5"/><text x="10" y="9" font-size="10" text-anchor="middle" fill="#111" font-family="Liberation Sans">R</text></svg><div style="position:absolute;left:401px;top:136.80px;font-size:13px;line-height:13px;color:#1c2850;white-space:nowrap;transform:scaleX(0.9229);transform-origin:0 0;">sF4</div><svg style="left:429px;top:127px" width="22" height="11"><path d="M0 4.5H3M17 4.5H20" stroke="#111" stroke-width="1.5"/><path d="M5.5 0Q3 4.5 5.5 9M14.5 0Q17 4.5 14.5 9" fill="none" stroke="#111" stroke-width="1.5"/><text x="10" y="9" font-size="10" text-anchor="middle" fill="#111" font-family="Liberation Sans">P</text></svg><div style="position:absolute;left:429.4px;top:136.80px;font-size:13px;line-height:13px;color:#1c2850;white-space:nowrap;transform:scaleX(0.8929);transform-origin:0 0;">sF5</div><svg style="left:456px;top:127px" width="22" height="11"><path d="M0 4.5H3M17 4.5H20" stroke="#111" stroke-width="1.5"/><path d="M5.5 0Q3 4.5 5.5 9M14.5 0Q17 4.5 14.5 9" fill="none" stroke="#111" stroke-width="1.5"/><text x="10" y="9" font-size="10" text-anchor="middle" fill="#111" font-family="Liberation Sans">N</text></svg><div style="position:absolute;left:456px;top:136.80px;font-size:13px;line-height:13px;color:#1c2850;white-space:nowrap;transform:scaleX(0.9229);transform-origin:0 0;">sF6</div><svg style="left:484px;top:127px" width="22" height="11"><path d="M0 4.5H3M17 4.5H20" stroke="#111" stroke-width="1.5"/><path d="M6 0Q4 0 4 2V3.5L3 4.5L4 5.5V7Q4 9 6 9M14 0Q16 0 16 2V3.5L17 4.5L16 5.5V7Q16 9 14 9" fill="none" stroke="#111" stroke-width="1.4"/><text x="10" y="9" font-size="10" text-anchor="middle" fill="#111" font-family="Liberation Sans">F</text></svg><div style="position:absolute;left:483.75px;top:136.80px;font-size:13px;line-height:13px;color:#1c2850;white-space:nowrap;transform:scaleX(0.8928);transform-origin:0 0;">F10</div><svg style="left:511px;top:127px" width="22" height="11"><path d="M0 4.5H3M17 4.5H20" stroke="#999" stroke-width="1.3"/><rect x="3.5" y="1" width="13" height="7" fill="none" stroke="#999" stroke-width="1.3"/></svg><div style="position:absolute;left:511px;top:136.80px;font-size:13px;line-height:13px;color:#a4a8b8;white-space:nowrap;transform:scaleX(0.9044);transform-origin:0 0;">sF7</div><svg style="left:539px;top:126px" width="22" height="11"><path d="M1 0V5H4M4 0V9M16 0V9M16 5H19M19 0V4" fill="none" stroke="#111" stroke-width="1.8"/></svg><div style="position:absolute;left:541.9px;top:136.80px;font-size:13px;line-height:13px;color:#1c2850;white-space:nowrap;transform:scaleX(0.9541);transform-origin:0 0;">c3</div><svg style="left:567px;top:126px" width="22" height="11"><path d="M1 0V5H4M4 0V9M16 0V9M16 5H19M19 0V4" fill="none" stroke="#111" stroke-width="1.8"/><path d="M6 9L13 1" stroke="#111" stroke-width="1.4"/></svg><div style="position:absolute;left:569.4px;top:136.80px;font-size:13px;line-height:13px;color:#1c2850;white-space:nowrap;transform:scaleX(0.9541);transform-origin:0 0;">c4</div><svg style="left:594px;top:126px" width="22" height="11"><path d="M1 0V5H4M4 0V9M16 0V9M16 5H19M19 0V4" fill="none" stroke="#111" stroke-width="1.8"/><text x="10" y="9" font-size="10" text-anchor="middle" fill="#111" font-family="Liberation Sans">P</text></svg><div style="position:absolute;left:596.9px;top:136.80px;font-size:13px;line-height:13px;color:#1c2850;white-space:nowrap;transform:scaleX(0.9541);transform-origin:0 0;">c5</div><svg style="left:622px;top:126px" width="22" height="11"><path d="M1 0V5H4M4 0V9M16 0V9M16 5H19M19 0V4" fill="none" stroke="#111" stroke-width="1.8"/><text x="10" y="9" font-size="10" text-anchor="middle" fill="#111" font-family="Liberation Sans">N</text></svg><div style="position:absolute;left:624.4px;top:136.80px;font-size:13px;line-height:13px;color:#1c2850;white-space:nowrap;transform:scaleX(0.9905);transform-origin:0 0;">c6</div><svg style="left:665px;top:125px" width="22" height="22"><rect x="1" y="3" width="16" height="15" rx="1" fill="#fbe0f4" stroke="#111" stroke-width="1.5"/><rect x="3" y="1.5" width="6" height="2" fill="#70c"/><path d="M4 7H14M4 10H14M4 13H14M4 16H14" stroke="#333" stroke-width="1.2"/></svg><div style="position:absolute;left:688px;top:122.5px;width:26px;height:26.0px;background:#fdf1c4;box-sizing:border-box;border:1px solid #e8c67c;"></div><div style="position:absolute;left:715px;top:122.5px;width:27px;height:26.0px;background:#fdf1c4;box-sizing:border-box;border:1px solid #e8c67c;"></div><svg style="left:692px;top:125px" width="22" height="22"><rect x="1.5" y="3" width="16" height="15" fill="#f2f2f2" stroke="#999" stroke-width="1.3"/><rect x="3" y="1.5" width="6" height="2" fill="#aaa"/><path d="M4 8H15M4 13H15M9 6V16" stroke="#bbb" stroke-dasharray="1.5 1.5"/></svg><svg style="left:718px;top:125px" width="22" height="22"><rect x="0.5" y="1" width="19" height="17" fill="#5aa6e6" stroke="#111" stroke-width="1.5"/><path d="M3 8H9L11 6H12V15H3Z" fill="#f4d040" stroke="#111"/><path d="M13 4L17 2M14 8L18 8M12 3L13 0" stroke="#f84" stroke-width="1.5"/></svg><svg style="left:746px;top:125px" width="22" height="22"><rect x="0.5" y="1" width="19" height="17" rx="1" fill="#d6e8fa" stroke="#333" stroke-width="1.5"/><path d="M3 8L10 13L17 8V16H3Z" fill="#b8e8b8" stroke="#111"/><path d="M5 10V4H15V10" fill="#fff" stroke="#111"/></svg><svg style="left:774px;top:125px" width="22" height="22"><rect x="0.5" y="1" width="19" height="17" rx="1" fill="#d6e8fa" stroke="#333" stroke-width="1.5"/><circle cx="6.5" cy="11" r="3.5" fill="#f8c8b8" stroke="#111"/><circle cx="13.5" cy="11" r="3.5" fill="#f8c8b8" stroke="#111"/><path d="M3 8L6 4M17 8L14 4M10 10V9" stroke="#111" fill="none"/></svg><svg style="left:801px;top:125px" width="22" height="22"><rect x="0.5" y="1" width="19" height="17" rx="1" fill="#d6e8fa" stroke="#333" stroke-width="1.5"/><text x="5" y="15" font-size="13" font-weight="bold" fill="#c06010" font-family="Liberation Sans">F</text></svg><div style="position:absolute;left:831px;top:123px;width:1px;height:25px;background:#b8c0cf;"></div><svg style="left:839px;top:125px" width="22" height="22"><rect x="0.5" y="1" width="19" height="17" rx="1" fill="#e8eef6" stroke="#333" stroke-width="1.5"/><rect x="3" y="4" width="14" height="3" fill="#dd4"/><path d="M10 7V10M5 10H15" stroke="#111"/><rect x="3" y="11" width="5" height="5" fill="#d36" stroke="#111"/><rect x="12" y="11" width="5" height="5" fill="#4ad" stroke="#111"/></svg><svg style="left:866px;top:125px" width="22" height="22"><rect x="0.5" y="1" width="19" height="17" rx="1" fill="#a8d8f8" stroke="#333" stroke-width="1.5"/><path d="M2 4H18" stroke="#2a2" stroke-width="2" stroke-dasharray="2 1"/><path d="M5 7V16M10 7V16M15 7V16" stroke="#50c" stroke-width="2"/><path d="M3 9L5 6L7 9M8 13L10 16L12 13M13 9L15 6L17 9" fill="#50c"/></svg><svg style="left:894px;top:125px" width="22" height="22"><rect x="0.5" y="8" width="19" height="10" fill="#c8f0e0" stroke="#111" stroke-width="1.5"/><path d="M3 12H17M3 15H17" stroke="#111" stroke-dasharray="1 1"/><path d="M6 1V7M14 1V7" stroke="#2a4" stroke-width="1.8"/><path d="M3 5L6 8L9 5M11 5L14 8L17 5" fill="#2a4"/></svg><div style="position:absolute;left:924px;top:123px;width:1px;height:25px;background:#b8c0cf;"></div><svg style="left:931px;top:125px" width="22" height="22"><path d="M1 1H14L18 5V18H1Z" fill="#c8ecc8" stroke="#111" stroke-width="1.6"/><path d="M14 1V5H18" fill="#fff" stroke="#111"/><path d="M4 6L9.5 14L15 6" fill="none" stroke="#f07a10" stroke-width="2.8"/></svg><svg style="left:959px;top:125px" width="22" height="22"><path d="M1 1H14L18 5V18H1Z" fill="#c8ecc8" stroke="#111" stroke-width="1.6"/><path d="M14 1V5H18" fill="#fff" stroke="#111"/><text x="2.5" y="15.5" font-size="14" font-weight="bold" fill="#1a7ae8" stroke="#1a7ae8" stroke-width="0.6" font-family="Liberation Sans">D</text></svg><div style="position:absolute;left:983px;top:122.5px;width:27px;height:26.0px;background:#fdf1c4;box-sizing:border-box;border:1px solid #e8c67c;"></div><svg style="left:987px;top:125px" width="22" height="22"><path d="M1 1H14L18 5V18H1Z" fill="#c8ecc8" stroke="#111" stroke-width="1.6"/><path d="M14 1V5H18" fill="#fff" stroke="#111"/><text x="1.5" y="15" font-size="12.5" font-weight="bold" fill="#1a7ae8" font-family="Liberation Sans">D</text><text x="9.5" y="16" font-size="11" font-weight="bold" fill="#f09020" font-family="Liberation Sans">y</text></svg><svg style="left:1013px;top:125px" width="22" height="22"><path d="M1 1H14L18 5V18H1Z" fill="#c8ecc8" stroke="#111" stroke-width="1.6"/><path d="M14 1V5H18" fill="#fff" stroke="#111"/><text x="1.5" y="15" font-size="12.5" font-weight="bold" fill="#1a7ae8" font-family="Liberation Sans">D</text><text x="9.5" y="16" font-size="11" font-weight="bold" fill="#f050c0" font-family="Liberation Sans">c</text></svg><svg style="left:1041px;top:125px" width="22" height="22"><path d="M1 1H14L18 5V18H1Z" fill="#c8ecc8" stroke="#111" stroke-width="1.6"/><path d="M14 1V5H18" fill="#fff" stroke="#111"/><text x="1.5" y="13" font-size="11" font-weight="bold" fill="#f09020" font-family="Liberation Sans">V</text><text x="9.5" y="16" font-size="11" font-weight="bold" fill="#f050c0" font-family="Liberation Sans">c</text></svg><svg style="left:1069px;top:125px" width="22" height="22"><path d="M1 1H14L18 5V18H1Z" fill="#c8ecc8" stroke="#111" stroke-width="1.6"/><path d="M14 1V5H18" fill="#fff" stroke="#111"/><text x="3" y="16" font-size="14" font-weight="bold" fill="#111" font-family="Liberation Sans">A</text></svg><div style="position:absolute;left:1098px;top:123px;width:1px;height:25px;background:#b8c0cf;"></div><svg style="left:1106px;top:125px" width="22" height="22"><circle cx="8" cy="8" r="6.5" fill="#a8d4f8" stroke="#111" stroke-width="1.6"/><path d="M12.5 12.5L17 17" stroke="#111" stroke-width="2.5"/><path d="M4.5 8H11.5M8 4.5V11.5" stroke="#2020c0" stroke-width="2.4"/></svg><svg style="left:1134px;top:125px" width="22" height="22"><circle cx="8" cy="8" r="6.5" fill="#c0f090" stroke="#111" stroke-width="1.6"/><path d="M12.5 12.5L17 17" stroke="#111" stroke-width="2.5"/><path d="M4.5 8H11.5" stroke="#108010" stroke-width="2.4"/></svg><div style="position:absolute;left:1163px;top:123px;width:1px;height:25px;background:#b8c0cf;"></div><svg style="left:1171px;top:125px" width="22" height="22"><circle cx="6" cy="5.5" r="4.5" fill="#6040e0" stroke="#111" stroke-width="1.4"/><path d="M3 9L0.5 13" stroke="#111" stroke-width="1.8"/><path d="M7 13H19M10 8V18M14 8V18" stroke="#f07030" stroke-width="2.5"/></svg><svg style="left:1199px;top:125px" width="22" height="22"><circle cx="6" cy="5.5" r="4.5" fill="#e0e0e0" stroke="#aaa" stroke-width="1.4"/><path d="M3 9L0.5 13" stroke="#aaa" stroke-width="1.8"/><path d="M7 13H19M10 8V18M14 8V18" stroke="#ddd" stroke-width="2.5"/></svg><div style="position:absolute;left:1229px;top:123px;width:1px;height:25px;background:#b8c0cf;"></div><svg style="left:1236px;top:125px" width="22" height="22"><rect x="0.5" y="1.5" width="19" height="16" rx="1" fill="#222" /><rect x="2.5" y="3.5" width="15" height="12" fill="#40d8e8"/><path d="M4 6H15M4 9H12M4 12H15" stroke="#123" stroke-width="1.4"/></svg><svg style="left:1279px;top:125px" width="22" height="22"><rect x="3.5" y="6.5" width="15" height="12" fill="#a8e8d8" stroke="#111" stroke-width="1.5"/><path d="M1 1H15V10H6L4 13V10H1Z" fill="#fff" stroke="#e03060" stroke-width="1.5"/><path d="M3 4H13M3 7H13" stroke="#999"/></svg><div style="position:absolute;left:1308px;top:123px;width:1px;height:25px;background:#b8c0cf;"></div><svg style="left:1316px;top:125px" width="22" height="22"><circle cx="8.5" cy="9.5" r="7.5" fill="#5a8af0" stroke="#111" stroke-width="1.4"/><path d="M5 9.5L8 12.5L13 6" fill="none" stroke="#e02030" stroke-width="2.2"/></svg><svg style="left:1344px;top:125px" width="22" height="22"><circle cx="8.5" cy="9.5" r="7.5" fill="#f06a80" stroke="#111" stroke-width="1.4"/><path d="M5.5 6.5L11.5 12.5M11.5 6.5L5.5 12.5" stroke="#2050e0" stroke-width="2.2"/></svg><svg style="left:1371px;top:126px" width="22" height="22"><path d="M1 9V16.5H19V9H16.5V14H3.5V9Z" fill="#c090e0" stroke="#111" stroke-width="1.4" stroke-linejoin="round"/><path d="M4 6L9.5 8.5V15L4 13Z" fill="#c8f0f8" stroke="#111" stroke-width="1.3"/><path d="M16 6L10.5 8.5V15L16 13Z" fill="#c8f0f8" stroke="#111" stroke-width="1.3"/></svg><svg style="left:1371px;top:125px" width="22" height="8"><path d="M2 1L5 4M15 1L18 4M1 4H5V1M14 4H18" stroke="#e03060" stroke-width="1.4" fill="none"/></svg><svg style="left:1399px;top:126px" width="22" height="22"><path d="M1 9V16.5H19V9H16.5V14H3.5V9Z" fill="#e4e4e4" stroke="#a8a8a8" stroke-width="1.4" stroke-linejoin="round"/><path d="M4 6L9.5 8.5V15L4 13Z" fill="#f0f0f0" stroke="#a8a8a8" stroke-width="1.3"/><path d="M16 6L10.5 8.5V15L16 13Z" fill="#f0f0f0" stroke="#a8a8a8" stroke-width="1.3"/></svg><svg style="left:1403px;top:123px" width="12" height="8"><path d="M3 0.5L9 6.5M9 0.5L3 6.5" stroke="#bbb" stroke-width="1.3"/></svg><svg style="left:1426px;top:126px" width="22" height="22"><path d="M1 9V16.5H19V9H16.5V14H3.5V9Z" fill="#e4e4e4" stroke="#a8a8a8" stroke-width="1.4" stroke-linejoin="round"/><path d="M4 6L9.5 8.5V15L4 13Z" fill="#f0f0f0" stroke="#a8a8a8" stroke-width="1.3"/><path d="M16 6L10.5 8.5V15L16 13Z" fill="#f0f0f0" stroke="#a8a8a8" stroke-width="1.3"/></svg><svg style="left:1430px;top:123px" width="12" height="8"><path d="M2 3L5 1M2 3L5 5M2 3Q9 0 9 6" stroke="#bbb" stroke-width="1.3" fill="none"/></svg><svg style="left:1453px;top:126px" width="22" height="22"><path d="M1 9V16.5H19V9H16.5V14H3.5V9Z" fill="#e4e4e4" stroke="#a8a8a8" stroke-width="1.4" stroke-linejoin="round"/><path d="M4 6L9.5 8.5V15L4 13Z" fill="#f0f0f0" stroke="#a8a8a8" stroke-width="1.3"/><path d="M16 6L10.5 8.5V15L16 13Z" fill="#f0f0f0" stroke="#a8a8a8" stroke-width="1.3"/></svg><svg style="left:1457px;top:123px" width="12" height="8"><path d="M10 3L7 1M10 3L7 5M10 3Q3 0 3 6" stroke="#bbb" stroke-width="1.3" fill="none"/></svg><div style="position:absolute;left:1015px;top:91px;width:27.5px;height:26.400000000000006px;background:#fdf1c4;box-sizing:border-box;border:1px solid #e8c67c;"></div><svg style="left:1021.5px;top:95px" width="14" height="13"><path d="M1 1H7L5.2 2.8L11.5 9.5L9.5 11.5L3 5L1 7Z" fill="#fff" stroke="#111" stroke-width="1.3" stroke-linejoin="round"/></svg><div style="position:absolute;left:1019.4px;top:105.30px;font-size:13px;line-height:13px;color:#1c2850;white-space:nowrap;transform:scaleX(0.9229);transform-origin:0 0;">Esc</div><svg style="left:1049px;top:95px" width="14" height="11"><rect x="2" y="0.5" width="8" height="5" fill="none" stroke="#999" stroke-width="1.2"/><path d="M6 5.5V9M1 7H11" stroke="#999" stroke-width="1.2"/></svg><div style="position:absolute;left:1049.4px;top:105.30px;font-size:13px;line-height:13px;color:#a4a8b8;white-space:nowrap;transform:scaleX(0.8305);transform-origin:0 0;">F3</div><svg style="left:1074px;top:95px" width="20" height="11"><path d="M0 4H2" stroke="#999"/><rect x="2.5" y="0.5" width="15" height="7" fill="none" stroke="#999" stroke-width="1.2"/><path d="M10 0.5V7.5" stroke="#999"/><text x="6" y="9" font-size="7" text-anchor="middle" fill="#999" font-family="Liberation Sans">N</text></svg><div style="position:absolute;left:1076px;top:105.30px;font-size:13px;line-height:13px;color:#a4a8b8;white-space:nowrap;transform:scaleX(0.9228);transform-origin:0 0;">F4</div><svg style="left:1104px;top:95px" width="14" height="11"><rect x="1" y="0.5" width="11" height="5" fill="none" stroke="#999" stroke-width="1.2"/><path d="M4.5 0.5V5.5M8.5 0.5V5.5M6.5 5.5V9M2 7H11" stroke="#999" stroke-width="1.2"/></svg><div style="position:absolute;left:1103.75px;top:105.30px;font-size:13px;line-height:13px;color:#a4a8b8;white-space:nowrap;transform:scaleX(0.9063);transform-origin:0 0;">F5</div><svg style="left:1132px;top:95px" width="14" height="11"><path d="M1 10V4H9" fill="none" stroke="#999" stroke-width="1.3"/><path d="M8 1L13 4L8 7Z" fill="#999"/></svg><div style="position:absolute;left:1131px;top:105.30px;font-size:13px;line-height:13px;color:#a4a8b8;white-space:nowrap;transform:scaleX(0.9228);transform-origin:0 0;">F6</div><svg style="left:1159px;top:95px" width="14" height="11"><path d="M1 0V6H9" fill="none" stroke="#999" stroke-width="1.3"/><path d="M8 3L13 6L8 9Z" fill="#999"/></svg><div style="position:absolute;left:1158px;top:105.30px;font-size:13px;line-height:13px;color:#a4a8b8;white-space:nowrap;transform:scaleX(0.9228);transform-origin:0 0;">F7</div><svg style="left:1184px;top:95px" width="20" height="11"><rect x="0.5" y="2.5" width="8" height="4" fill="none" stroke="#ccc" stroke-width="1.2"/><rect x="10.5" y="2.5" width="8" height="4" fill="none" stroke="#aaa" stroke-width="1.2"/><path d="M14.5 0V9" stroke="#aaa"/></svg><div style="position:absolute;left:1186px;top:105.30px;font-size:13px;line-height:13px;color:#a4a8b8;white-space:nowrap;transform:scaleX(0.9228);transform-origin:0 0;">F8</div><svg style="left:1211px;top:95px" width="20" height="11"><rect x="0.5" y="2.5" width="8" height="4" fill="none" stroke="#aaa" stroke-width="1.2"/><rect x="10.5" y="2.5" width="8" height="4" fill="none" stroke="#ccc" stroke-width="1.2"/><path d="M4.5 0V9" stroke="#aaa"/></svg><div style="position:absolute;left:1214px;top:105.30px;font-size:13px;line-height:13px;color:#a4a8b8;white-space:nowrap;transform:scaleX(0.9228);transform-origin:0 0;">F9</div><div style="position:absolute;left:173px;top:93.98px;font-size:22px;line-height:22px;color:#000;white-space:nowrap;transform:scaleX(1.2392);transform-origin:0 0;font-weight:bold;-webkit-text-stroke:1.5px #000;">InstrumentationTools.com</div><svg style="left:3px;top:2px" width="18" height="20"><defs><radialGradient id="gl" cx="0.6" cy="0.6" r="0.6"><stop offset="0" stop-color="#e8f8ff"/><stop offset="0.5" stop-color="#40b8f0"/><stop offset="1" stop-color="#1a8ad8"/></radialGradient></defs><circle cx="8" cy="8.5" r="6.5" fill="url(#gl)"/><path d="M3 4L8 8.5L8 2Z" fill="#2ad0f0" opacity="0.7"/><path d="M11 11L17 12L15 14L17 17L15 19L12 16L11 19Z" fill="#4c4"/></svg><svg style="left:3.5px;top:31px" width="8" height="27"><rect x="0" y="1.5" width="1.7" height="1.7" fill="#6a6a6a"/><rect x="5" y="1.5" width="1.7" height="1.7" fill="#6a6a6a"/><rect x="2.5" y="4.0" width="1.7" height="1.7" fill="#6a6a6a"/><rect x="0" y="6.5" width="1.7" height="1.7" fill="#6a6a6a"/><rect x="5" y="6.5" width="1.7" height="1.7" fill="#6a6a6a"/><rect x="2.5" y="9.0" width="1.7" height="1.7" fill="#6a6a6a"/><rect x="0" y="11.5" width="1.7" height="1.7" fill="#6a6a6a"/><rect x="5" y="11.5" width="1.7" height="1.7" fill="#6a6a6a"/><rect x="2.5" y="14.0" width="1.7" height="1.7" fill="#6a6a6a"/><rect x="0" y="16.5" width="1.7" height="1.7" fill="#6a6a6a"/><rect x="5" y="16.5" width="1.7" height="1.7" fill="#6a6a6a"/><rect x="2.5" y="19.0" width="1.7" height="1.7" fill="#6a6a6a"/><rect x="0" y="21.5" width="1.7" height="1.7" fill="#6a6a6a"/><rect x="5" y="21.5" width="1.7" height="1.7" fill="#6a6a6a"/><rect x="2.5" y="24.0" width="1.7" height="1.7" fill="#6a6a6a"/></svg><svg style="left:1456px;top:1005px" width="18" height="20"><path d="M4 8V5Q4 1 8.5 1Q13 1 13 5V8" fill="none" stroke="#6a8cb0" stroke-width="2"/><rect x="1" y="8" width="15" height="11" rx="1.5" fill="#7a9a68"/><circle cx="8.5" cy="13" r="1" fill="#234"/></svg><svg style="left:1498px;top:1006px" width="19" height="19"><path d="M9.5 0.5L12 3.5L16 3L15.5 7L18.5 9.5L15.5 12L16 16L12 15.5L9.5 18.5L7 15.5L3 16L3.5 12L0.5 9.5L3.5 7L3 3L7 3.5Z" fill="#4aa8e8"/><path d="M6 6.5L13 12.5M13 6.5L6 12.5" stroke="#9ad0f0" stroke-width="2.2"/></svg><div style="position:absolute;left:1583.5px;top:1005px;width:25px;height:20px;background:#0a5c9e;"></div><svg style="left:1534px;top:1006px" width="19" height="19"><path d="M1 1H13L17 5V17.5H1Z" fill="#c8ecc8" stroke="#111" stroke-width="1.6"/><path d="M13 1V5H17" fill="#fff" stroke="#111"/><path d="M4 6L9 13L14 6" fill="none" stroke="#f07a10" stroke-width="2.6"/></svg><svg style="left:1560px;top:1006px" width="19" height="19"><path d="M1 1H13L17 5V17.5H1Z" fill="#c8ecc8" stroke="#111" stroke-width="1.6"/><path d="M13 1V5H17" fill="#fff" stroke="#111"/><text x="2.5" y="14.5" font-size="13" font-weight="bold" fill="#1a7ae8" stroke="#1a7ae8" stroke-width="0.5" font-family="Liberation Sans">D</text></svg><svg style="left:1588px;top:1006px" width="19" height="19"><path d="M1 1H13L17 5V17.5H1Z" fill="#c8ecc8" stroke="#111" stroke-width="1.6"/><path d="M13 1V5H17" fill="#fff" stroke="#111"/><text x="1.5" y="14" font-size="11.5" font-weight="bold" fill="#1a7ae8" font-family="Liberation Sans">D</text><text x="8.5" y="15" font-size="10" font-weight="bold" fill="#f09020" font-family="Liberation Sans">y</text></svg><svg style="left:1614.5px;top:1006px" width="19" height="19"><path d="M1 1H13L17 5V17.5H1Z" fill="#c8ecc8" stroke="#111" stroke-width="1.6"/><path d="M13 1V5H17" fill="#fff" stroke="#111"/><text x="1.5" y="14" font-size="11.5" font-weight="bold" fill="#1a7ae8" font-family="Liberation Sans">D</text><text x="8.5" y="15" font-size="10" font-weight="bold" fill="#f050c0" font-family="Liberation Sans">c</text></svg><svg style="left:1642px;top:1006px" width="19" height="19"><path d="M1 1H13L17 5V17.5H1Z" fill="#c8ecc8" stroke="#111" stroke-width="1.6"/><path d="M13 1V5H17" fill="#fff" stroke="#111"/><text x="1.5" y="12" font-size="10" font-weight="bold" fill="#f09020" font-family="Liberation Sans">V</text><text x="8.5" y="15" font-size="10" font-weight="bold" fill="#f050c0" font-family="Liberation Sans">c</text></svg><svg style="left:1670px;top:1006px" width="19" height="19"><path d="M1 1H13L17 5V17.5H1Z" fill="#c8ecc8" stroke="#111" stroke-width="1.6"/><path d="M13 1V5H17" fill="#fff" stroke="#111"/><text x="2.5" y="15" font-size="13" font-weight="bold" fill="#111" font-family="Liberation Sans">A</text></svg>
</div></body></html>
